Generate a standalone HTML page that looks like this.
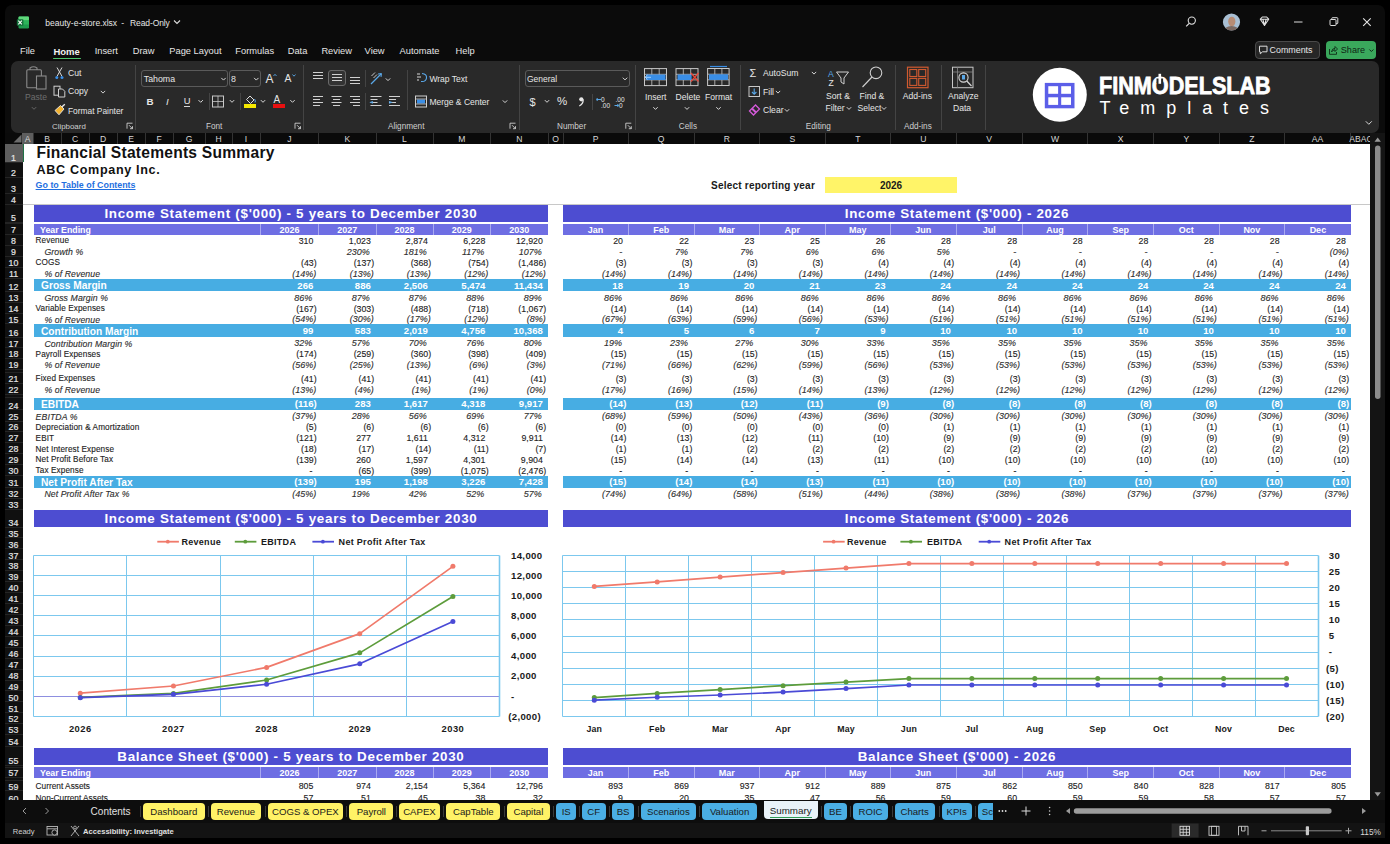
<!DOCTYPE html><html><head><meta charset="utf-8"><style>
html,body{margin:0;padding:0;width:1390px;height:844px;overflow:hidden;background:#000;}
body{position:relative;font-family:"Liberation Sans", sans-serif;}
.t{position:absolute;white-space:nowrap;}
.s .t{-webkit-text-stroke:0.12px currentColor;}
.s .t[style*='font-weight:bold']{-webkit-text-stroke:0;}
.r{position:absolute;}
svg{position:absolute;overflow:visible;}
</style></head><body>
<div class="r" style="left:5.00px;top:5.00px;width:1379.70px;height:833.40px;background:#0b0b0b;border-radius:7px 7px 0 0;"></div>
<div class="r" style="left:11.00px;top:61.00px;width:1368.00px;height:71.50px;background:#292929;border-radius:7px;"></div>
<div class="r" style="left:5.00px;top:133.00px;width:1365.00px;height:10.50px;background:#0a0a0a;"></div>
<div class="r" style="left:22.00px;top:133.00px;width:11.00px;height:10.50px;background:#5e5e5e;"></div>
<div class="r" style="left:32.50px;top:133.00px;width:1.00px;height:10.50px;background:#333;"></div>
<div class="t" style="top:134.52px;font-size:8.6px;line-height:8.6px;color:#d6d6d6;left:-2.50px;width:60px;text-align:center;">A</div>
<div class="r" style="left:60.50px;top:133.00px;width:1.00px;height:10.50px;background:#333;"></div>
<div class="t" style="top:134.52px;font-size:8.6px;line-height:8.6px;color:#d6d6d6;left:17.00px;width:60px;text-align:center;">B</div>
<div class="r" style="left:88.50px;top:133.00px;width:1.00px;height:10.50px;background:#333;"></div>
<div class="t" style="top:134.52px;font-size:8.6px;line-height:8.6px;color:#d6d6d6;left:45.00px;width:60px;text-align:center;">C</div>
<div class="r" style="left:116.50px;top:133.00px;width:1.00px;height:10.50px;background:#333;"></div>
<div class="t" style="top:134.52px;font-size:8.6px;line-height:8.6px;color:#d6d6d6;left:73.00px;width:60px;text-align:center;">D</div>
<div class="r" style="left:144.50px;top:133.00px;width:1.00px;height:10.50px;background:#333;"></div>
<div class="t" style="top:134.52px;font-size:8.6px;line-height:8.6px;color:#d6d6d6;left:101.00px;width:60px;text-align:center;">E</div>
<div class="r" style="left:172.50px;top:133.00px;width:1.00px;height:10.50px;background:#333;"></div>
<div class="t" style="top:134.52px;font-size:8.6px;line-height:8.6px;color:#d6d6d6;left:129.00px;width:60px;text-align:center;">F</div>
<div class="r" style="left:204.50px;top:133.00px;width:1.00px;height:10.50px;background:#333;"></div>
<div class="t" style="top:134.52px;font-size:8.6px;line-height:8.6px;color:#d6d6d6;left:159.00px;width:60px;text-align:center;">G</div>
<div class="r" style="left:231.50px;top:133.00px;width:1.00px;height:10.50px;background:#333;"></div>
<div class="t" style="top:134.52px;font-size:8.6px;line-height:8.6px;color:#d6d6d6;left:188.50px;width:60px;text-align:center;">H</div>
<div class="r" style="left:259.50px;top:133.00px;width:1.00px;height:10.50px;background:#333;"></div>
<div class="t" style="top:134.52px;font-size:8.6px;line-height:8.6px;color:#d6d6d6;left:216.00px;width:60px;text-align:center;">I</div>
<div class="r" style="left:318.00px;top:133.00px;width:1.00px;height:10.50px;background:#333;"></div>
<div class="t" style="top:134.52px;font-size:8.6px;line-height:8.6px;color:#d6d6d6;left:259.50px;width:60px;text-align:center;">J</div>
<div class="r" style="left:375.50px;top:133.00px;width:1.00px;height:10.50px;background:#333;"></div>
<div class="t" style="top:134.52px;font-size:8.6px;line-height:8.6px;color:#d6d6d6;left:317.25px;width:60px;text-align:center;">K</div>
<div class="r" style="left:432.50px;top:133.00px;width:1.00px;height:10.50px;background:#333;"></div>
<div class="t" style="top:134.52px;font-size:8.6px;line-height:8.6px;color:#d6d6d6;left:374.50px;width:60px;text-align:center;">L</div>
<div class="r" style="left:490.00px;top:133.00px;width:1.00px;height:10.50px;background:#333;"></div>
<div class="t" style="top:134.52px;font-size:8.6px;line-height:8.6px;color:#d6d6d6;left:431.75px;width:60px;text-align:center;">M</div>
<div class="r" style="left:547.50px;top:133.00px;width:1.00px;height:10.50px;background:#333;"></div>
<div class="t" style="top:134.52px;font-size:8.6px;line-height:8.6px;color:#d6d6d6;left:489.25px;width:60px;text-align:center;">N</div>
<div class="r" style="left:562.50px;top:133.00px;width:1.00px;height:10.50px;background:#333;"></div>
<div class="t" style="top:134.52px;font-size:8.6px;line-height:8.6px;color:#d6d6d6;left:525.50px;width:60px;text-align:center;">O</div>
<div class="r" style="left:627.70px;top:133.00px;width:1.00px;height:10.50px;background:#333;"></div>
<div class="t" style="top:134.52px;font-size:8.6px;line-height:8.6px;color:#d6d6d6;left:565.60px;width:60px;text-align:center;">P</div>
<div class="r" style="left:693.70px;top:133.00px;width:1.00px;height:10.50px;background:#333;"></div>
<div class="t" style="top:134.52px;font-size:8.6px;line-height:8.6px;color:#d6d6d6;left:631.20px;width:60px;text-align:center;">Q</div>
<div class="r" style="left:759.00px;top:133.00px;width:1.00px;height:10.50px;background:#333;"></div>
<div class="t" style="top:134.52px;font-size:8.6px;line-height:8.6px;color:#d6d6d6;left:696.85px;width:60px;text-align:center;">R</div>
<div class="r" style="left:824.50px;top:133.00px;width:1.00px;height:10.50px;background:#333;"></div>
<div class="t" style="top:134.52px;font-size:8.6px;line-height:8.6px;color:#d6d6d6;left:762.25px;width:60px;text-align:center;">S</div>
<div class="r" style="left:890.20px;top:133.00px;width:1.00px;height:10.50px;background:#333;"></div>
<div class="t" style="top:134.52px;font-size:8.6px;line-height:8.6px;color:#d6d6d6;left:827.85px;width:60px;text-align:center;">T</div>
<div class="r" style="left:955.50px;top:133.00px;width:1.00px;height:10.50px;background:#333;"></div>
<div class="t" style="top:134.52px;font-size:8.6px;line-height:8.6px;color:#d6d6d6;left:893.35px;width:60px;text-align:center;">U</div>
<div class="r" style="left:1021.80px;top:133.00px;width:1.00px;height:10.50px;background:#333;"></div>
<div class="t" style="top:134.52px;font-size:8.6px;line-height:8.6px;color:#d6d6d6;left:959.15px;width:60px;text-align:center;">V</div>
<div class="r" style="left:1087.30px;top:133.00px;width:1.00px;height:10.50px;background:#333;"></div>
<div class="t" style="top:134.52px;font-size:8.6px;line-height:8.6px;color:#d6d6d6;left:1025.05px;width:60px;text-align:center;">W</div>
<div class="r" style="left:1153.10px;top:133.00px;width:1.00px;height:10.50px;background:#333;"></div>
<div class="t" style="top:134.52px;font-size:8.6px;line-height:8.6px;color:#d6d6d6;left:1090.70px;width:60px;text-align:center;">X</div>
<div class="r" style="left:1218.50px;top:133.00px;width:1.00px;height:10.50px;background:#333;"></div>
<div class="t" style="top:134.52px;font-size:8.6px;line-height:8.6px;color:#d6d6d6;left:1156.30px;width:60px;text-align:center;">Y</div>
<div class="r" style="left:1284.30px;top:133.00px;width:1.00px;height:10.50px;background:#333;"></div>
<div class="t" style="top:134.52px;font-size:8.6px;line-height:8.6px;color:#d6d6d6;left:1221.90px;width:60px;text-align:center;">Z</div>
<div class="r" style="left:1349.50px;top:133.00px;width:1.00px;height:10.50px;background:#333;"></div>
<div class="t" style="top:134.52px;font-size:8.6px;line-height:8.6px;color:#d6d6d6;left:1287.40px;width:60px;text-align:center;">AA</div>
<div class="t" style="top:134.52px;font-size:8.6px;line-height:8.6px;color:#d6d6d6;left:1341.00px;width:40px;text-align:center;">ABAC</div>
<svg style="left:13px;top:134px" width="9" height="9"><polygon points="8.5,0.5 8.5,8.5 0.5,8.5" fill="#6b6b6b"/></svg>
<div class="r" style="left:5.00px;top:143.50px;width:17.50px;height:657.00px;background:#101010;"></div>
<div class="r" style="left:5.00px;top:143.50px;width:17.50px;height:18.50px;background:#5e5e5e;"></div>
<div class="r" style="left:5.00px;top:161.50px;width:17.50px;height:1.00px;background:#242424;"></div>
<div class="t" style="top:153.75px;font-size:8.8px;line-height:8.8px;color:#e4e4e4;left:3.50px;width:20px;text-align:center;-webkit-text-stroke:0.2px #e4e4e4;">1</div>
<div class="r" style="left:5.00px;top:177.20px;width:17.50px;height:1.00px;background:#242424;"></div>
<div class="t" style="top:169.45px;font-size:8.8px;line-height:8.8px;color:#e4e4e4;left:3.50px;width:20px;text-align:center;-webkit-text-stroke:0.2px #e4e4e4;">2</div>
<div class="r" style="left:5.00px;top:192.80px;width:17.50px;height:1.00px;background:#242424;"></div>
<div class="t" style="top:185.05px;font-size:8.8px;line-height:8.8px;color:#e4e4e4;left:3.50px;width:20px;text-align:center;-webkit-text-stroke:0.2px #e4e4e4;">3</div>
<div class="r" style="left:5.00px;top:203.80px;width:17.50px;height:1.00px;background:#242424;"></div>
<div class="t" style="top:196.05px;font-size:8.8px;line-height:8.8px;color:#e4e4e4;left:3.50px;width:20px;text-align:center;-webkit-text-stroke:0.2px #e4e4e4;">4</div>
<div class="r" style="left:5.00px;top:221.70px;width:17.50px;height:1.00px;background:#242424;"></div>
<div class="t" style="top:213.95px;font-size:8.8px;line-height:8.8px;color:#e4e4e4;left:3.50px;width:20px;text-align:center;-webkit-text-stroke:0.2px #e4e4e4;">5</div>
<div class="r" style="left:5.00px;top:223.00px;width:17.50px;height:1.00px;background:#242424;"></div>
<div class="r" style="left:5.00px;top:234.00px;width:17.50px;height:1.00px;background:#242424;"></div>
<div class="t" style="top:226.25px;font-size:8.8px;line-height:8.8px;color:#e4e4e4;left:3.50px;width:20px;text-align:center;-webkit-text-stroke:0.2px #e4e4e4;">7</div>
<div class="r" style="left:5.00px;top:244.80px;width:17.50px;height:1.00px;background:#242424;"></div>
<div class="t" style="top:237.05px;font-size:8.8px;line-height:8.8px;color:#e4e4e4;left:3.50px;width:20px;text-align:center;-webkit-text-stroke:0.2px #e4e4e4;">8</div>
<div class="r" style="left:5.00px;top:255.80px;width:17.50px;height:1.00px;background:#242424;"></div>
<div class="t" style="top:248.05px;font-size:8.8px;line-height:8.8px;color:#e4e4e4;left:3.50px;width:20px;text-align:center;-webkit-text-stroke:0.2px #e4e4e4;">9</div>
<div class="r" style="left:5.00px;top:266.70px;width:17.50px;height:1.00px;background:#242424;"></div>
<div class="t" style="top:258.95px;font-size:8.8px;line-height:8.8px;color:#e4e4e4;left:3.50px;width:20px;text-align:center;-webkit-text-stroke:0.2px #e4e4e4;">10</div>
<div class="r" style="left:5.00px;top:277.60px;width:17.50px;height:1.00px;background:#242424;"></div>
<div class="t" style="top:269.85px;font-size:8.8px;line-height:8.8px;color:#e4e4e4;left:3.50px;width:20px;text-align:center;-webkit-text-stroke:0.2px #e4e4e4;">11</div>
<div class="r" style="left:5.00px;top:290.90px;width:17.50px;height:1.00px;background:#242424;"></div>
<div class="t" style="top:283.15px;font-size:8.8px;line-height:8.8px;color:#e4e4e4;left:3.50px;width:20px;text-align:center;-webkit-text-stroke:0.2px #e4e4e4;">12</div>
<div class="r" style="left:5.00px;top:301.70px;width:17.50px;height:1.00px;background:#242424;"></div>
<div class="t" style="top:293.95px;font-size:8.8px;line-height:8.8px;color:#e4e4e4;left:3.50px;width:20px;text-align:center;-webkit-text-stroke:0.2px #e4e4e4;">13</div>
<div class="r" style="left:5.00px;top:312.50px;width:17.50px;height:1.00px;background:#242424;"></div>
<div class="t" style="top:304.75px;font-size:8.8px;line-height:8.8px;color:#e4e4e4;left:3.50px;width:20px;text-align:center;-webkit-text-stroke:0.2px #e4e4e4;">14</div>
<div class="r" style="left:5.00px;top:323.30px;width:17.50px;height:1.00px;background:#242424;"></div>
<div class="t" style="top:315.55px;font-size:8.8px;line-height:8.8px;color:#e4e4e4;left:3.50px;width:20px;text-align:center;-webkit-text-stroke:0.2px #e4e4e4;">15</div>
<div class="r" style="left:5.00px;top:336.60px;width:17.50px;height:1.00px;background:#242424;"></div>
<div class="t" style="top:328.85px;font-size:8.8px;line-height:8.8px;color:#e4e4e4;left:3.50px;width:20px;text-align:center;-webkit-text-stroke:0.2px #e4e4e4;">16</div>
<div class="r" style="left:5.00px;top:347.40px;width:17.50px;height:1.00px;background:#242424;"></div>
<div class="t" style="top:339.65px;font-size:8.8px;line-height:8.8px;color:#e4e4e4;left:3.50px;width:20px;text-align:center;-webkit-text-stroke:0.2px #e4e4e4;">17</div>
<div class="r" style="left:5.00px;top:358.20px;width:17.50px;height:1.00px;background:#242424;"></div>
<div class="t" style="top:350.45px;font-size:8.8px;line-height:8.8px;color:#e4e4e4;left:3.50px;width:20px;text-align:center;-webkit-text-stroke:0.2px #e4e4e4;">18</div>
<div class="r" style="left:5.00px;top:369.00px;width:17.50px;height:1.00px;background:#242424;"></div>
<div class="t" style="top:361.25px;font-size:8.8px;line-height:8.8px;color:#e4e4e4;left:3.50px;width:20px;text-align:center;-webkit-text-stroke:0.2px #e4e4e4;">19</div>
<div class="r" style="left:5.00px;top:371.50px;width:17.50px;height:1.00px;background:#242424;"></div>
<div class="r" style="left:5.00px;top:382.50px;width:17.50px;height:1.00px;background:#242424;"></div>
<div class="t" style="top:374.75px;font-size:8.8px;line-height:8.8px;color:#e4e4e4;left:3.50px;width:20px;text-align:center;-webkit-text-stroke:0.2px #e4e4e4;">21</div>
<div class="r" style="left:5.00px;top:393.90px;width:17.50px;height:1.00px;background:#242424;"></div>
<div class="t" style="top:386.15px;font-size:8.8px;line-height:8.8px;color:#e4e4e4;left:3.50px;width:20px;text-align:center;-webkit-text-stroke:0.2px #e4e4e4;">22</div>
<div class="r" style="left:5.00px;top:397.00px;width:17.50px;height:1.00px;background:#242424;"></div>
<div class="r" style="left:5.00px;top:409.30px;width:17.50px;height:1.00px;background:#242424;"></div>
<div class="t" style="top:401.55px;font-size:8.8px;line-height:8.8px;color:#e4e4e4;left:3.50px;width:20px;text-align:center;-webkit-text-stroke:0.2px #e4e4e4;">24</div>
<div class="r" style="left:5.00px;top:420.50px;width:17.50px;height:1.00px;background:#242424;"></div>
<div class="t" style="top:412.75px;font-size:8.8px;line-height:8.8px;color:#e4e4e4;left:3.50px;width:20px;text-align:center;-webkit-text-stroke:0.2px #e4e4e4;">25</div>
<div class="r" style="left:5.00px;top:431.20px;width:17.50px;height:1.00px;background:#242424;"></div>
<div class="t" style="top:423.45px;font-size:8.8px;line-height:8.8px;color:#e4e4e4;left:3.50px;width:20px;text-align:center;-webkit-text-stroke:0.2px #e4e4e4;">26</div>
<div class="r" style="left:5.00px;top:442.00px;width:17.50px;height:1.00px;background:#242424;"></div>
<div class="t" style="top:434.25px;font-size:8.8px;line-height:8.8px;color:#e4e4e4;left:3.50px;width:20px;text-align:center;-webkit-text-stroke:0.2px #e4e4e4;">27</div>
<div class="r" style="left:5.00px;top:453.00px;width:17.50px;height:1.00px;background:#242424;"></div>
<div class="t" style="top:445.25px;font-size:8.8px;line-height:8.8px;color:#e4e4e4;left:3.50px;width:20px;text-align:center;-webkit-text-stroke:0.2px #e4e4e4;">28</div>
<div class="r" style="left:5.00px;top:463.80px;width:17.50px;height:1.00px;background:#242424;"></div>
<div class="t" style="top:456.05px;font-size:8.8px;line-height:8.8px;color:#e4e4e4;left:3.50px;width:20px;text-align:center;-webkit-text-stroke:0.2px #e4e4e4;">29</div>
<div class="r" style="left:5.00px;top:474.50px;width:17.50px;height:1.00px;background:#242424;"></div>
<div class="t" style="top:466.75px;font-size:8.8px;line-height:8.8px;color:#e4e4e4;left:3.50px;width:20px;text-align:center;-webkit-text-stroke:0.2px #e4e4e4;">30</div>
<div class="r" style="left:5.00px;top:487.20px;width:17.50px;height:1.00px;background:#242424;"></div>
<div class="t" style="top:479.45px;font-size:8.8px;line-height:8.8px;color:#e4e4e4;left:3.50px;width:20px;text-align:center;-webkit-text-stroke:0.2px #e4e4e4;">31</div>
<div class="r" style="left:5.00px;top:497.80px;width:17.50px;height:1.00px;background:#242424;"></div>
<div class="t" style="top:490.05px;font-size:8.8px;line-height:8.8px;color:#e4e4e4;left:3.50px;width:20px;text-align:center;-webkit-text-stroke:0.2px #e4e4e4;">32</div>
<div class="r" style="left:5.00px;top:509.00px;width:17.50px;height:1.00px;background:#242424;"></div>
<div class="t" style="top:501.25px;font-size:8.8px;line-height:8.8px;color:#e4e4e4;left:3.50px;width:20px;text-align:center;-webkit-text-stroke:0.2px #e4e4e4;">33</div>
<div class="r" style="left:5.00px;top:526.50px;width:17.50px;height:1.00px;background:#242424;"></div>
<div class="t" style="top:518.75px;font-size:8.8px;line-height:8.8px;color:#e4e4e4;left:3.50px;width:20px;text-align:center;-webkit-text-stroke:0.2px #e4e4e4;">34</div>
<div class="r" style="left:5.00px;top:537.43px;width:17.50px;height:1.00px;background:#242424;"></div>
<div class="t" style="top:529.68px;font-size:8.8px;line-height:8.8px;color:#e4e4e4;left:3.50px;width:20px;text-align:center;-webkit-text-stroke:0.2px #e4e4e4;">35</div>
<div class="r" style="left:5.00px;top:548.36px;width:17.50px;height:1.00px;background:#242424;"></div>
<div class="t" style="top:540.61px;font-size:8.8px;line-height:8.8px;color:#e4e4e4;left:3.50px;width:20px;text-align:center;-webkit-text-stroke:0.2px #e4e4e4;">36</div>
<div class="r" style="left:5.00px;top:559.29px;width:17.50px;height:1.00px;background:#242424;"></div>
<div class="t" style="top:551.54px;font-size:8.8px;line-height:8.8px;color:#e4e4e4;left:3.50px;width:20px;text-align:center;-webkit-text-stroke:0.2px #e4e4e4;">37</div>
<div class="r" style="left:5.00px;top:570.22px;width:17.50px;height:1.00px;background:#242424;"></div>
<div class="t" style="top:562.47px;font-size:8.8px;line-height:8.8px;color:#e4e4e4;left:3.50px;width:20px;text-align:center;-webkit-text-stroke:0.2px #e4e4e4;">38</div>
<div class="r" style="left:5.00px;top:581.15px;width:17.50px;height:1.00px;background:#242424;"></div>
<div class="t" style="top:573.40px;font-size:8.8px;line-height:8.8px;color:#e4e4e4;left:3.50px;width:20px;text-align:center;-webkit-text-stroke:0.2px #e4e4e4;">39</div>
<div class="r" style="left:5.00px;top:592.08px;width:17.50px;height:1.00px;background:#242424;"></div>
<div class="t" style="top:584.33px;font-size:8.8px;line-height:8.8px;color:#e4e4e4;left:3.50px;width:20px;text-align:center;-webkit-text-stroke:0.2px #e4e4e4;">40</div>
<div class="r" style="left:5.00px;top:603.01px;width:17.50px;height:1.00px;background:#242424;"></div>
<div class="t" style="top:595.26px;font-size:8.8px;line-height:8.8px;color:#e4e4e4;left:3.50px;width:20px;text-align:center;-webkit-text-stroke:0.2px #e4e4e4;">41</div>
<div class="r" style="left:5.00px;top:613.94px;width:17.50px;height:1.00px;background:#242424;"></div>
<div class="t" style="top:606.19px;font-size:8.8px;line-height:8.8px;color:#e4e4e4;left:3.50px;width:20px;text-align:center;-webkit-text-stroke:0.2px #e4e4e4;">42</div>
<div class="r" style="left:5.00px;top:624.87px;width:17.50px;height:1.00px;background:#242424;"></div>
<div class="t" style="top:617.12px;font-size:8.8px;line-height:8.8px;color:#e4e4e4;left:3.50px;width:20px;text-align:center;-webkit-text-stroke:0.2px #e4e4e4;">43</div>
<div class="r" style="left:5.00px;top:635.80px;width:17.50px;height:1.00px;background:#242424;"></div>
<div class="t" style="top:628.05px;font-size:8.8px;line-height:8.8px;color:#e4e4e4;left:3.50px;width:20px;text-align:center;-webkit-text-stroke:0.2px #e4e4e4;">44</div>
<div class="r" style="left:5.00px;top:646.73px;width:17.50px;height:1.00px;background:#242424;"></div>
<div class="t" style="top:638.98px;font-size:8.8px;line-height:8.8px;color:#e4e4e4;left:3.50px;width:20px;text-align:center;-webkit-text-stroke:0.2px #e4e4e4;">45</div>
<div class="r" style="left:5.00px;top:657.66px;width:17.50px;height:1.00px;background:#242424;"></div>
<div class="t" style="top:649.91px;font-size:8.8px;line-height:8.8px;color:#e4e4e4;left:3.50px;width:20px;text-align:center;-webkit-text-stroke:0.2px #e4e4e4;">46</div>
<div class="r" style="left:5.00px;top:668.59px;width:17.50px;height:1.00px;background:#242424;"></div>
<div class="t" style="top:660.84px;font-size:8.8px;line-height:8.8px;color:#e4e4e4;left:3.50px;width:20px;text-align:center;-webkit-text-stroke:0.2px #e4e4e4;">47</div>
<div class="r" style="left:5.00px;top:679.52px;width:17.50px;height:1.00px;background:#242424;"></div>
<div class="t" style="top:671.77px;font-size:8.8px;line-height:8.8px;color:#e4e4e4;left:3.50px;width:20px;text-align:center;-webkit-text-stroke:0.2px #e4e4e4;">48</div>
<div class="r" style="left:5.00px;top:690.45px;width:17.50px;height:1.00px;background:#242424;"></div>
<div class="t" style="top:682.70px;font-size:8.8px;line-height:8.8px;color:#e4e4e4;left:3.50px;width:20px;text-align:center;-webkit-text-stroke:0.2px #e4e4e4;">49</div>
<div class="r" style="left:5.00px;top:701.38px;width:17.50px;height:1.00px;background:#242424;"></div>
<div class="t" style="top:693.63px;font-size:8.8px;line-height:8.8px;color:#e4e4e4;left:3.50px;width:20px;text-align:center;-webkit-text-stroke:0.2px #e4e4e4;">50</div>
<div class="r" style="left:5.00px;top:712.31px;width:17.50px;height:1.00px;background:#242424;"></div>
<div class="t" style="top:704.56px;font-size:8.8px;line-height:8.8px;color:#e4e4e4;left:3.50px;width:20px;text-align:center;-webkit-text-stroke:0.2px #e4e4e4;">51</div>
<div class="r" style="left:5.00px;top:723.24px;width:17.50px;height:1.00px;background:#242424;"></div>
<div class="t" style="top:715.49px;font-size:8.8px;line-height:8.8px;color:#e4e4e4;left:3.50px;width:20px;text-align:center;-webkit-text-stroke:0.2px #e4e4e4;">52</div>
<div class="r" style="left:5.00px;top:734.17px;width:17.50px;height:1.00px;background:#242424;"></div>
<div class="t" style="top:726.42px;font-size:8.8px;line-height:8.8px;color:#e4e4e4;left:3.50px;width:20px;text-align:center;-webkit-text-stroke:0.2px #e4e4e4;">53</div>
<div class="r" style="left:5.00px;top:745.50px;width:17.50px;height:1.00px;background:#242424;"></div>
<div class="t" style="top:737.75px;font-size:8.8px;line-height:8.8px;color:#e4e4e4;left:3.50px;width:20px;text-align:center;-webkit-text-stroke:0.2px #e4e4e4;">54</div>
<div class="r" style="left:5.00px;top:764.50px;width:17.50px;height:1.00px;background:#242424;"></div>
<div class="t" style="top:756.75px;font-size:8.8px;line-height:8.8px;color:#e4e4e4;left:3.50px;width:20px;text-align:center;-webkit-text-stroke:0.2px #e4e4e4;">55</div>
<div class="r" style="left:5.00px;top:766.70px;width:17.50px;height:1.00px;background:#242424;"></div>
<div class="r" style="left:5.00px;top:777.00px;width:17.50px;height:1.00px;background:#242424;"></div>
<div class="t" style="top:769.25px;font-size:8.8px;line-height:8.8px;color:#e4e4e4;left:3.50px;width:20px;text-align:center;-webkit-text-stroke:0.2px #e4e4e4;">57</div>
<div class="r" style="left:5.00px;top:779.50px;width:17.50px;height:1.00px;background:#242424;"></div>
<div class="r" style="left:5.00px;top:790.30px;width:17.50px;height:1.00px;background:#242424;"></div>
<div class="t" style="top:782.55px;font-size:8.8px;line-height:8.8px;color:#e4e4e4;left:3.50px;width:20px;text-align:center;-webkit-text-stroke:0.2px #e4e4e4;">59</div>
<div class="r" style="left:5.00px;top:802.50px;width:17.50px;height:1.00px;background:#242424;"></div>
<div class="t" style="top:794.75px;font-size:8.8px;line-height:8.8px;color:#e4e4e4;left:3.50px;width:20px;text-align:center;-webkit-text-stroke:0.2px #e4e4e4;">60</div>
<div class="r" style="left:22.50px;top:143.50px;width:1347.50px;height:656.50px;background:#ffffff;"></div>
<div class="r" style="left:22.50px;top:204.00px;width:1347.50px;height:0.80px;background:#c8c8c8;"></div>
<div class="r" style="left:22.50px;top:143.50px;width:1.20px;height:18.50px;background:#1e7145;"></div>
<div class="s">
<div class="t" style="top:145.29px;font-size:15.6px;line-height:15.6px;color:#111;font-weight:bold;letter-spacing:0.24px;left:36.50px;">Financial Statements Summary</div>
<div class="t" style="top:164.03px;font-size:12.6px;line-height:12.6px;color:#111;font-weight:bold;letter-spacing:0.66px;left:36.50px;">ABC Company Inc.</div>
<div class="t" style="top:180.77px;font-size:8.9px;line-height:8.9px;color:#1f6fe0;font-weight:bold;left:35.60px;"><u>Go to Table of Contents</u></div>
<div class="t" style="top:180.53px;font-size:10px;line-height:10px;color:#1a1a1a;font-weight:bold;letter-spacing:0.21px;right:575.00px;">Select reporting year</div>
<div class="r" style="left:825.00px;top:176.80px;width:132.00px;height:16.60px;background:#fff468;"></div>
<div class="t" style="top:180.53px;font-size:10px;line-height:10px;color:#1a1a1a;font-weight:bold;left:851.00px;width:80px;text-align:center;">2026</div>
<div class="r" style="left:33.80px;top:205.00px;width:514.20px;height:16.70px;background:#4d4dd1;"></div>
<div class="r" style="left:562.80px;top:205.00px;width:788.20px;height:16.70px;background:#4d4dd1;"></div>
<div class="t" style="top:206.76px;font-size:13.4px;line-height:13.4px;color:#fff;font-weight:bold;letter-spacing:0.7px;left:-9.10px;width:600px;text-align:center;">Income Statement ($'000) - 5 years to December 2030</div>
<div class="t" style="top:206.76px;font-size:13.4px;line-height:13.4px;color:#fff;font-weight:bold;letter-spacing:0.7px;left:656.90px;width:600px;text-align:center;">Income Statement ($'000) - 2026</div>
<div class="r" style="left:33.80px;top:223.90px;width:514.20px;height:10.90px;background:#6e6ee3;"></div>
<div class="r" style="left:562.80px;top:223.90px;width:788.20px;height:10.90px;background:#6e6ee3;"></div>
<div class="t" style="top:226.15px;font-size:8.8px;line-height:8.8px;color:#fff;font-weight:bold;left:40.00px;">Year Ending</div>
<div class="r" style="left:260.00px;top:223.90px;width:1.00px;height:10.90px;background:#a9a9f0;"></div>
<div class="t" style="top:225.98px;font-size:9px;line-height:9px;color:#fff;font-weight:bold;left:259.50px;width:60px;text-align:center;">2026</div>
<div class="r" style="left:318.00px;top:223.90px;width:1.00px;height:10.90px;background:#a9a9f0;"></div>
<div class="t" style="top:225.98px;font-size:9px;line-height:9px;color:#fff;font-weight:bold;left:317.25px;width:60px;text-align:center;">2027</div>
<div class="r" style="left:375.50px;top:223.90px;width:1.00px;height:10.90px;background:#a9a9f0;"></div>
<div class="t" style="top:225.98px;font-size:9px;line-height:9px;color:#fff;font-weight:bold;left:374.50px;width:60px;text-align:center;">2028</div>
<div class="r" style="left:432.50px;top:223.90px;width:1.00px;height:10.90px;background:#a9a9f0;"></div>
<div class="t" style="top:225.98px;font-size:9px;line-height:9px;color:#fff;font-weight:bold;left:431.75px;width:60px;text-align:center;">2029</div>
<div class="r" style="left:490.00px;top:223.90px;width:1.00px;height:10.90px;background:#a9a9f0;"></div>
<div class="t" style="top:225.98px;font-size:9px;line-height:9px;color:#fff;font-weight:bold;left:489.25px;width:60px;text-align:center;">2030</div>
<div class="t" style="top:225.98px;font-size:9px;line-height:9px;color:#fff;font-weight:bold;left:565.60px;width:60px;text-align:center;">Jan</div>
<div class="r" style="left:627.70px;top:223.90px;width:1.00px;height:10.90px;background:#a9a9f0;"></div>
<div class="t" style="top:225.98px;font-size:9px;line-height:9px;color:#fff;font-weight:bold;left:631.20px;width:60px;text-align:center;">Feb</div>
<div class="r" style="left:693.70px;top:223.90px;width:1.00px;height:10.90px;background:#a9a9f0;"></div>
<div class="t" style="top:225.98px;font-size:9px;line-height:9px;color:#fff;font-weight:bold;left:696.85px;width:60px;text-align:center;">Mar</div>
<div class="r" style="left:759.00px;top:223.90px;width:1.00px;height:10.90px;background:#a9a9f0;"></div>
<div class="t" style="top:225.98px;font-size:9px;line-height:9px;color:#fff;font-weight:bold;left:762.25px;width:60px;text-align:center;">Apr</div>
<div class="r" style="left:824.50px;top:223.90px;width:1.00px;height:10.90px;background:#a9a9f0;"></div>
<div class="t" style="top:225.98px;font-size:9px;line-height:9px;color:#fff;font-weight:bold;left:827.85px;width:60px;text-align:center;">May</div>
<div class="r" style="left:890.20px;top:223.90px;width:1.00px;height:10.90px;background:#a9a9f0;"></div>
<div class="t" style="top:225.98px;font-size:9px;line-height:9px;color:#fff;font-weight:bold;left:893.35px;width:60px;text-align:center;">Jun</div>
<div class="r" style="left:955.50px;top:223.90px;width:1.00px;height:10.90px;background:#a9a9f0;"></div>
<div class="t" style="top:225.98px;font-size:9px;line-height:9px;color:#fff;font-weight:bold;left:959.15px;width:60px;text-align:center;">Jul</div>
<div class="r" style="left:1021.80px;top:223.90px;width:1.00px;height:10.90px;background:#a9a9f0;"></div>
<div class="t" style="top:225.98px;font-size:9px;line-height:9px;color:#fff;font-weight:bold;left:1025.05px;width:60px;text-align:center;">Aug</div>
<div class="r" style="left:1087.30px;top:223.90px;width:1.00px;height:10.90px;background:#a9a9f0;"></div>
<div class="t" style="top:225.98px;font-size:9px;line-height:9px;color:#fff;font-weight:bold;left:1090.70px;width:60px;text-align:center;">Sep</div>
<div class="r" style="left:1153.10px;top:223.90px;width:1.00px;height:10.90px;background:#a9a9f0;"></div>
<div class="t" style="top:225.98px;font-size:9px;line-height:9px;color:#fff;font-weight:bold;left:1156.30px;width:60px;text-align:center;">Oct</div>
<div class="r" style="left:1218.50px;top:223.90px;width:1.00px;height:10.90px;background:#a9a9f0;"></div>
<div class="t" style="top:225.98px;font-size:9px;line-height:9px;color:#fff;font-weight:bold;left:1221.90px;width:60px;text-align:center;">Nov</div>
<div class="r" style="left:1284.30px;top:223.90px;width:1.00px;height:10.90px;background:#a9a9f0;"></div>
<div class="t" style="top:225.98px;font-size:9px;line-height:9px;color:#fff;font-weight:bold;left:1287.90px;width:60px;text-align:center;">Dec</div>
<div class="t" style="top:237.46px;font-size:8.2px;line-height:8.2px;color:#1c1c1c;letter-spacing:0.1px;left:35.60px;">Revenue</div>
<div class="t" style="top:236.95px;font-size:8.8px;line-height:8.8px;color:#1c1c1c;right:1076.70px;">310</div>
<div class="t" style="top:236.95px;font-size:8.8px;line-height:8.8px;color:#1c1c1c;right:1019.20px;">1,023</div>
<div class="t" style="top:236.95px;font-size:8.8px;line-height:8.8px;color:#1c1c1c;right:962.20px;">2,874</div>
<div class="t" style="top:236.95px;font-size:8.8px;line-height:8.8px;color:#1c1c1c;right:904.70px;">6,228</div>
<div class="t" style="top:236.95px;font-size:8.8px;line-height:8.8px;color:#1c1c1c;right:847.20px;">12,920</div>
<div class="t" style="top:236.95px;font-size:8.8px;line-height:8.8px;color:#1c1c1c;right:767.00px;">20</div>
<div class="t" style="top:236.95px;font-size:8.8px;line-height:8.8px;color:#1c1c1c;right:701.00px;">22</div>
<div class="t" style="top:236.95px;font-size:8.8px;line-height:8.8px;color:#1c1c1c;right:635.70px;">23</div>
<div class="t" style="top:236.95px;font-size:8.8px;line-height:8.8px;color:#1c1c1c;right:570.20px;">25</div>
<div class="t" style="top:236.95px;font-size:8.8px;line-height:8.8px;color:#1c1c1c;right:504.50px;">26</div>
<div class="t" style="top:236.95px;font-size:8.8px;line-height:8.8px;color:#1c1c1c;right:439.20px;">28</div>
<div class="t" style="top:236.95px;font-size:8.8px;line-height:8.8px;color:#1c1c1c;right:372.90px;">28</div>
<div class="t" style="top:236.95px;font-size:8.8px;line-height:8.8px;color:#1c1c1c;right:307.40px;">28</div>
<div class="t" style="top:236.95px;font-size:8.8px;line-height:8.8px;color:#1c1c1c;right:241.60px;">28</div>
<div class="t" style="top:236.95px;font-size:8.8px;line-height:8.8px;color:#1c1c1c;right:176.20px;">28</div>
<div class="t" style="top:236.95px;font-size:8.8px;line-height:8.8px;color:#1c1c1c;right:110.40px;">28</div>
<div class="t" style="top:236.95px;font-size:8.8px;line-height:8.8px;color:#1c1c1c;right:44.20px;">28</div>
<div class="t" style="top:248.04px;font-size:8.7px;line-height:8.7px;color:#2e2e2e;font-style:italic;letter-spacing:0.1px;left:44.40px;">Growth %</div>
<div class="t" style="top:247.78px;font-size:9.0px;line-height:9.0px;color:#2e2e2e;font-style:italic;right:1020.20px;">230%</div>
<div class="t" style="top:247.78px;font-size:9.0px;line-height:9.0px;color:#2e2e2e;font-style:italic;right:963.20px;">181%</div>
<div class="t" style="top:247.78px;font-size:9.0px;line-height:9.0px;color:#2e2e2e;font-style:italic;right:905.70px;">117%</div>
<div class="t" style="top:247.78px;font-size:9.0px;line-height:9.0px;color:#2e2e2e;font-style:italic;right:848.20px;">107%</div>
<div class="t" style="top:247.78px;font-size:9.0px;line-height:9.0px;color:#2e2e2e;font-style:italic;right:767.80px;">-</div>
<div class="t" style="top:247.78px;font-size:9.0px;line-height:9.0px;color:#2e2e2e;font-style:italic;right:702.00px;">7%</div>
<div class="t" style="top:247.78px;font-size:9.0px;line-height:9.0px;color:#2e2e2e;font-style:italic;right:636.70px;">7%</div>
<div class="t" style="top:247.78px;font-size:9.0px;line-height:9.0px;color:#2e2e2e;font-style:italic;right:571.20px;">6%</div>
<div class="t" style="top:247.78px;font-size:9.0px;line-height:9.0px;color:#2e2e2e;font-style:italic;right:505.50px;">6%</div>
<div class="t" style="top:247.78px;font-size:9.0px;line-height:9.0px;color:#2e2e2e;font-style:italic;right:440.20px;">5%</div>
<div class="t" style="top:247.78px;font-size:9.0px;line-height:9.0px;color:#2e2e2e;font-style:italic;right:373.70px;">-</div>
<div class="t" style="top:247.78px;font-size:9.0px;line-height:9.0px;color:#2e2e2e;font-style:italic;right:308.20px;">-</div>
<div class="t" style="top:247.78px;font-size:9.0px;line-height:9.0px;color:#2e2e2e;font-style:italic;right:242.40px;">-</div>
<div class="t" style="top:247.78px;font-size:9.0px;line-height:9.0px;color:#2e2e2e;font-style:italic;right:177.00px;">-</div>
<div class="t" style="top:247.78px;font-size:9.0px;line-height:9.0px;color:#2e2e2e;font-style:italic;right:111.20px;">-</div>
<div class="t" style="top:247.78px;font-size:9.0px;line-height:9.0px;color:#2e2e2e;font-style:italic;right:41.20px;">(0%)</div>
<div class="t" style="top:259.36px;font-size:8.2px;line-height:8.2px;color:#1c1c1c;letter-spacing:0.1px;left:35.60px;">COGS</div>
<div class="t" style="top:258.85px;font-size:8.8px;line-height:8.8px;color:#1c1c1c;right:1073.30px;">(43)</div>
<div class="t" style="top:258.85px;font-size:8.8px;line-height:8.8px;color:#1c1c1c;right:1015.80px;">(137)</div>
<div class="t" style="top:258.85px;font-size:8.8px;line-height:8.8px;color:#1c1c1c;right:958.80px;">(368)</div>
<div class="t" style="top:258.85px;font-size:8.8px;line-height:8.8px;color:#1c1c1c;right:901.30px;">(754)</div>
<div class="t" style="top:258.85px;font-size:8.8px;line-height:8.8px;color:#1c1c1c;right:843.80px;">(1,486)</div>
<div class="t" style="top:258.85px;font-size:8.8px;line-height:8.8px;color:#1c1c1c;right:763.60px;">(3)</div>
<div class="t" style="top:258.85px;font-size:8.8px;line-height:8.8px;color:#1c1c1c;right:697.60px;">(3)</div>
<div class="t" style="top:258.85px;font-size:8.8px;line-height:8.8px;color:#1c1c1c;right:632.30px;">(3)</div>
<div class="t" style="top:258.85px;font-size:8.8px;line-height:8.8px;color:#1c1c1c;right:566.80px;">(3)</div>
<div class="t" style="top:258.85px;font-size:8.8px;line-height:8.8px;color:#1c1c1c;right:501.10px;">(4)</div>
<div class="t" style="top:258.85px;font-size:8.8px;line-height:8.8px;color:#1c1c1c;right:435.80px;">(4)</div>
<div class="t" style="top:258.85px;font-size:8.8px;line-height:8.8px;color:#1c1c1c;right:369.50px;">(4)</div>
<div class="t" style="top:258.85px;font-size:8.8px;line-height:8.8px;color:#1c1c1c;right:304.00px;">(4)</div>
<div class="t" style="top:258.85px;font-size:8.8px;line-height:8.8px;color:#1c1c1c;right:238.20px;">(4)</div>
<div class="t" style="top:258.85px;font-size:8.8px;line-height:8.8px;color:#1c1c1c;right:172.80px;">(4)</div>
<div class="t" style="top:258.85px;font-size:8.8px;line-height:8.8px;color:#1c1c1c;right:107.00px;">(4)</div>
<div class="t" style="top:258.85px;font-size:8.8px;line-height:8.8px;color:#1c1c1c;right:40.80px;">(4)</div>
<div class="t" style="top:269.84px;font-size:8.7px;line-height:8.7px;color:#2e2e2e;font-style:italic;letter-spacing:0.1px;left:44.40px;">% of Revenue</div>
<div class="t" style="top:269.58px;font-size:9.0px;line-height:9.0px;color:#2e2e2e;font-style:italic;right:1073.70px;">(14%)</div>
<div class="t" style="top:269.58px;font-size:9.0px;line-height:9.0px;color:#2e2e2e;font-style:italic;right:1016.20px;">(13%)</div>
<div class="t" style="top:269.58px;font-size:9.0px;line-height:9.0px;color:#2e2e2e;font-style:italic;right:959.20px;">(13%)</div>
<div class="t" style="top:269.58px;font-size:9.0px;line-height:9.0px;color:#2e2e2e;font-style:italic;right:901.70px;">(12%)</div>
<div class="t" style="top:269.58px;font-size:9.0px;line-height:9.0px;color:#2e2e2e;font-style:italic;right:844.20px;">(12%)</div>
<div class="t" style="top:269.58px;font-size:9.0px;line-height:9.0px;color:#2e2e2e;font-style:italic;right:764.00px;">(14%)</div>
<div class="t" style="top:269.58px;font-size:9.0px;line-height:9.0px;color:#2e2e2e;font-style:italic;right:698.00px;">(14%)</div>
<div class="t" style="top:269.58px;font-size:9.0px;line-height:9.0px;color:#2e2e2e;font-style:italic;right:632.70px;">(14%)</div>
<div class="t" style="top:269.58px;font-size:9.0px;line-height:9.0px;color:#2e2e2e;font-style:italic;right:567.20px;">(14%)</div>
<div class="t" style="top:269.58px;font-size:9.0px;line-height:9.0px;color:#2e2e2e;font-style:italic;right:501.50px;">(14%)</div>
<div class="t" style="top:269.58px;font-size:9.0px;line-height:9.0px;color:#2e2e2e;font-style:italic;right:436.20px;">(14%)</div>
<div class="t" style="top:269.58px;font-size:9.0px;line-height:9.0px;color:#2e2e2e;font-style:italic;right:369.90px;">(14%)</div>
<div class="t" style="top:269.58px;font-size:9.0px;line-height:9.0px;color:#2e2e2e;font-style:italic;right:304.40px;">(14%)</div>
<div class="t" style="top:269.58px;font-size:9.0px;line-height:9.0px;color:#2e2e2e;font-style:italic;right:238.60px;">(14%)</div>
<div class="t" style="top:269.58px;font-size:9.0px;line-height:9.0px;color:#2e2e2e;font-style:italic;right:173.20px;">(14%)</div>
<div class="t" style="top:269.58px;font-size:9.0px;line-height:9.0px;color:#2e2e2e;font-style:italic;right:107.40px;">(14%)</div>
<div class="t" style="top:269.58px;font-size:9.0px;line-height:9.0px;color:#2e2e2e;font-style:italic;right:41.20px;">(14%)</div>
<div class="r" style="left:33.80px;top:278.70px;width:514.20px;height:12.70px;background:#47ade3;"></div>
<div class="r" style="left:562.80px;top:278.70px;width:788.20px;height:12.70px;background:#47ade3;"></div>
<div class="t" style="top:281.37px;font-size:10.2px;line-height:10.2px;color:#fff;font-weight:bold;left:41.00px;">Gross Margin</div>
<div class="t" style="top:280.57px;font-size:9.6px;line-height:9.6px;color:#fff;font-weight:bold;right:1076.70px;">266</div>
<div class="t" style="top:280.57px;font-size:9.6px;line-height:9.6px;color:#fff;font-weight:bold;right:1019.20px;">886</div>
<div class="t" style="top:280.57px;font-size:9.6px;line-height:9.6px;color:#fff;font-weight:bold;right:962.20px;">2,506</div>
<div class="t" style="top:280.57px;font-size:9.6px;line-height:9.6px;color:#fff;font-weight:bold;right:904.70px;">5,474</div>
<div class="t" style="top:280.57px;font-size:9.6px;line-height:9.6px;color:#fff;font-weight:bold;right:847.20px;">11,434</div>
<div class="t" style="top:280.57px;font-size:9.6px;line-height:9.6px;color:#fff;font-weight:bold;right:767.00px;">18</div>
<div class="t" style="top:280.57px;font-size:9.6px;line-height:9.6px;color:#fff;font-weight:bold;right:701.00px;">19</div>
<div class="t" style="top:280.57px;font-size:9.6px;line-height:9.6px;color:#fff;font-weight:bold;right:635.70px;">20</div>
<div class="t" style="top:280.57px;font-size:9.6px;line-height:9.6px;color:#fff;font-weight:bold;right:570.20px;">21</div>
<div class="t" style="top:280.57px;font-size:9.6px;line-height:9.6px;color:#fff;font-weight:bold;right:504.50px;">23</div>
<div class="t" style="top:280.57px;font-size:9.6px;line-height:9.6px;color:#fff;font-weight:bold;right:439.20px;">24</div>
<div class="t" style="top:280.57px;font-size:9.6px;line-height:9.6px;color:#fff;font-weight:bold;right:372.90px;">24</div>
<div class="t" style="top:280.57px;font-size:9.6px;line-height:9.6px;color:#fff;font-weight:bold;right:307.40px;">24</div>
<div class="t" style="top:280.57px;font-size:9.6px;line-height:9.6px;color:#fff;font-weight:bold;right:241.60px;">24</div>
<div class="t" style="top:280.57px;font-size:9.6px;line-height:9.6px;color:#fff;font-weight:bold;right:176.20px;">24</div>
<div class="t" style="top:280.57px;font-size:9.6px;line-height:9.6px;color:#fff;font-weight:bold;right:110.40px;">24</div>
<div class="t" style="top:280.57px;font-size:9.6px;line-height:9.6px;color:#fff;font-weight:bold;right:44.20px;">24</div>
<div class="t" style="top:293.94px;font-size:8.7px;line-height:8.7px;color:#2e2e2e;font-style:italic;letter-spacing:0.1px;left:44.40px;">Gross Margin %</div>
<div class="t" style="top:293.68px;font-size:9.0px;line-height:9.0px;color:#2e2e2e;font-style:italic;right:1077.70px;">86%</div>
<div class="t" style="top:293.68px;font-size:9.0px;line-height:9.0px;color:#2e2e2e;font-style:italic;right:1020.20px;">87%</div>
<div class="t" style="top:293.68px;font-size:9.0px;line-height:9.0px;color:#2e2e2e;font-style:italic;right:963.20px;">87%</div>
<div class="t" style="top:293.68px;font-size:9.0px;line-height:9.0px;color:#2e2e2e;font-style:italic;right:905.70px;">88%</div>
<div class="t" style="top:293.68px;font-size:9.0px;line-height:9.0px;color:#2e2e2e;font-style:italic;right:848.20px;">89%</div>
<div class="t" style="top:293.68px;font-size:9.0px;line-height:9.0px;color:#2e2e2e;font-style:italic;right:768.00px;">86%</div>
<div class="t" style="top:293.68px;font-size:9.0px;line-height:9.0px;color:#2e2e2e;font-style:italic;right:702.00px;">86%</div>
<div class="t" style="top:293.68px;font-size:9.0px;line-height:9.0px;color:#2e2e2e;font-style:italic;right:636.70px;">86%</div>
<div class="t" style="top:293.68px;font-size:9.0px;line-height:9.0px;color:#2e2e2e;font-style:italic;right:571.20px;">86%</div>
<div class="t" style="top:293.68px;font-size:9.0px;line-height:9.0px;color:#2e2e2e;font-style:italic;right:505.50px;">86%</div>
<div class="t" style="top:293.68px;font-size:9.0px;line-height:9.0px;color:#2e2e2e;font-style:italic;right:440.20px;">86%</div>
<div class="t" style="top:293.68px;font-size:9.0px;line-height:9.0px;color:#2e2e2e;font-style:italic;right:373.90px;">86%</div>
<div class="t" style="top:293.68px;font-size:9.0px;line-height:9.0px;color:#2e2e2e;font-style:italic;right:308.40px;">86%</div>
<div class="t" style="top:293.68px;font-size:9.0px;line-height:9.0px;color:#2e2e2e;font-style:italic;right:242.60px;">86%</div>
<div class="t" style="top:293.68px;font-size:9.0px;line-height:9.0px;color:#2e2e2e;font-style:italic;right:177.20px;">86%</div>
<div class="t" style="top:293.68px;font-size:9.0px;line-height:9.0px;color:#2e2e2e;font-style:italic;right:111.40px;">86%</div>
<div class="t" style="top:293.68px;font-size:9.0px;line-height:9.0px;color:#2e2e2e;font-style:italic;right:45.20px;">86%</div>
<div class="t" style="top:305.16px;font-size:8.2px;line-height:8.2px;color:#1c1c1c;letter-spacing:0.1px;left:35.60px;">Variable Expenses</div>
<div class="t" style="top:304.65px;font-size:8.8px;line-height:8.8px;color:#1c1c1c;right:1073.30px;">(167)</div>
<div class="t" style="top:304.65px;font-size:8.8px;line-height:8.8px;color:#1c1c1c;right:1015.80px;">(303)</div>
<div class="t" style="top:304.65px;font-size:8.8px;line-height:8.8px;color:#1c1c1c;right:958.80px;">(488)</div>
<div class="t" style="top:304.65px;font-size:8.8px;line-height:8.8px;color:#1c1c1c;right:901.30px;">(718)</div>
<div class="t" style="top:304.65px;font-size:8.8px;line-height:8.8px;color:#1c1c1c;right:843.80px;">(1,067)</div>
<div class="t" style="top:304.65px;font-size:8.8px;line-height:8.8px;color:#1c1c1c;right:763.60px;">(14)</div>
<div class="t" style="top:304.65px;font-size:8.8px;line-height:8.8px;color:#1c1c1c;right:697.60px;">(14)</div>
<div class="t" style="top:304.65px;font-size:8.8px;line-height:8.8px;color:#1c1c1c;right:632.30px;">(14)</div>
<div class="t" style="top:304.65px;font-size:8.8px;line-height:8.8px;color:#1c1c1c;right:566.80px;">(14)</div>
<div class="t" style="top:304.65px;font-size:8.8px;line-height:8.8px;color:#1c1c1c;right:501.10px;">(14)</div>
<div class="t" style="top:304.65px;font-size:8.8px;line-height:8.8px;color:#1c1c1c;right:435.80px;">(14)</div>
<div class="t" style="top:304.65px;font-size:8.8px;line-height:8.8px;color:#1c1c1c;right:369.50px;">(14)</div>
<div class="t" style="top:304.65px;font-size:8.8px;line-height:8.8px;color:#1c1c1c;right:304.00px;">(14)</div>
<div class="t" style="top:304.65px;font-size:8.8px;line-height:8.8px;color:#1c1c1c;right:238.20px;">(14)</div>
<div class="t" style="top:304.65px;font-size:8.8px;line-height:8.8px;color:#1c1c1c;right:172.80px;">(14)</div>
<div class="t" style="top:304.65px;font-size:8.8px;line-height:8.8px;color:#1c1c1c;right:107.00px;">(14)</div>
<div class="t" style="top:304.65px;font-size:8.8px;line-height:8.8px;color:#1c1c1c;right:40.80px;">(14)</div>
<div class="t" style="top:315.54px;font-size:8.7px;line-height:8.7px;color:#2e2e2e;font-style:italic;letter-spacing:0.1px;left:44.40px;">% of Revenue</div>
<div class="t" style="top:315.28px;font-size:9.0px;line-height:9.0px;color:#2e2e2e;font-style:italic;right:1073.70px;">(54%)</div>
<div class="t" style="top:315.28px;font-size:9.0px;line-height:9.0px;color:#2e2e2e;font-style:italic;right:1016.20px;">(30%)</div>
<div class="t" style="top:315.28px;font-size:9.0px;line-height:9.0px;color:#2e2e2e;font-style:italic;right:959.20px;">(17%)</div>
<div class="t" style="top:315.28px;font-size:9.0px;line-height:9.0px;color:#2e2e2e;font-style:italic;right:901.70px;">(12%)</div>
<div class="t" style="top:315.28px;font-size:9.0px;line-height:9.0px;color:#2e2e2e;font-style:italic;right:844.20px;">(8%)</div>
<div class="t" style="top:315.28px;font-size:9.0px;line-height:9.0px;color:#2e2e2e;font-style:italic;right:764.00px;">(67%)</div>
<div class="t" style="top:315.28px;font-size:9.0px;line-height:9.0px;color:#2e2e2e;font-style:italic;right:698.00px;">(63%)</div>
<div class="t" style="top:315.28px;font-size:9.0px;line-height:9.0px;color:#2e2e2e;font-style:italic;right:632.70px;">(59%)</div>
<div class="t" style="top:315.28px;font-size:9.0px;line-height:9.0px;color:#2e2e2e;font-style:italic;right:567.20px;">(56%)</div>
<div class="t" style="top:315.28px;font-size:9.0px;line-height:9.0px;color:#2e2e2e;font-style:italic;right:501.50px;">(53%)</div>
<div class="t" style="top:315.28px;font-size:9.0px;line-height:9.0px;color:#2e2e2e;font-style:italic;right:436.20px;">(51%)</div>
<div class="t" style="top:315.28px;font-size:9.0px;line-height:9.0px;color:#2e2e2e;font-style:italic;right:369.90px;">(51%)</div>
<div class="t" style="top:315.28px;font-size:9.0px;line-height:9.0px;color:#2e2e2e;font-style:italic;right:304.40px;">(51%)</div>
<div class="t" style="top:315.28px;font-size:9.0px;line-height:9.0px;color:#2e2e2e;font-style:italic;right:238.60px;">(51%)</div>
<div class="t" style="top:315.28px;font-size:9.0px;line-height:9.0px;color:#2e2e2e;font-style:italic;right:173.20px;">(51%)</div>
<div class="t" style="top:315.28px;font-size:9.0px;line-height:9.0px;color:#2e2e2e;font-style:italic;right:107.40px;">(51%)</div>
<div class="t" style="top:315.28px;font-size:9.0px;line-height:9.0px;color:#2e2e2e;font-style:italic;right:41.20px;">(51%)</div>
<div class="r" style="left:33.80px;top:324.40px;width:514.20px;height:12.70px;background:#47ade3;"></div>
<div class="r" style="left:562.80px;top:324.40px;width:788.20px;height:12.70px;background:#47ade3;"></div>
<div class="t" style="top:327.07px;font-size:10.2px;line-height:10.2px;color:#fff;font-weight:bold;left:41.00px;">Contribution Margin</div>
<div class="t" style="top:326.27px;font-size:9.6px;line-height:9.6px;color:#fff;font-weight:bold;right:1076.70px;">99</div>
<div class="t" style="top:326.27px;font-size:9.6px;line-height:9.6px;color:#fff;font-weight:bold;right:1019.20px;">583</div>
<div class="t" style="top:326.27px;font-size:9.6px;line-height:9.6px;color:#fff;font-weight:bold;right:962.20px;">2,019</div>
<div class="t" style="top:326.27px;font-size:9.6px;line-height:9.6px;color:#fff;font-weight:bold;right:904.70px;">4,756</div>
<div class="t" style="top:326.27px;font-size:9.6px;line-height:9.6px;color:#fff;font-weight:bold;right:847.20px;">10,368</div>
<div class="t" style="top:326.27px;font-size:9.6px;line-height:9.6px;color:#fff;font-weight:bold;right:767.00px;">4</div>
<div class="t" style="top:326.27px;font-size:9.6px;line-height:9.6px;color:#fff;font-weight:bold;right:701.00px;">5</div>
<div class="t" style="top:326.27px;font-size:9.6px;line-height:9.6px;color:#fff;font-weight:bold;right:635.70px;">6</div>
<div class="t" style="top:326.27px;font-size:9.6px;line-height:9.6px;color:#fff;font-weight:bold;right:570.20px;">7</div>
<div class="t" style="top:326.27px;font-size:9.6px;line-height:9.6px;color:#fff;font-weight:bold;right:504.50px;">9</div>
<div class="t" style="top:326.27px;font-size:9.6px;line-height:9.6px;color:#fff;font-weight:bold;right:439.20px;">10</div>
<div class="t" style="top:326.27px;font-size:9.6px;line-height:9.6px;color:#fff;font-weight:bold;right:372.90px;">10</div>
<div class="t" style="top:326.27px;font-size:9.6px;line-height:9.6px;color:#fff;font-weight:bold;right:307.40px;">10</div>
<div class="t" style="top:326.27px;font-size:9.6px;line-height:9.6px;color:#fff;font-weight:bold;right:241.60px;">10</div>
<div class="t" style="top:326.27px;font-size:9.6px;line-height:9.6px;color:#fff;font-weight:bold;right:176.20px;">10</div>
<div class="t" style="top:326.27px;font-size:9.6px;line-height:9.6px;color:#fff;font-weight:bold;right:110.40px;">10</div>
<div class="t" style="top:326.27px;font-size:9.6px;line-height:9.6px;color:#fff;font-weight:bold;right:44.20px;">10</div>
<div class="t" style="top:339.64px;font-size:8.7px;line-height:8.7px;color:#2e2e2e;font-style:italic;letter-spacing:0.1px;left:44.40px;">Contribution Margin %</div>
<div class="t" style="top:339.38px;font-size:9.0px;line-height:9.0px;color:#2e2e2e;font-style:italic;right:1077.70px;">32%</div>
<div class="t" style="top:339.38px;font-size:9.0px;line-height:9.0px;color:#2e2e2e;font-style:italic;right:1020.20px;">57%</div>
<div class="t" style="top:339.38px;font-size:9.0px;line-height:9.0px;color:#2e2e2e;font-style:italic;right:963.20px;">70%</div>
<div class="t" style="top:339.38px;font-size:9.0px;line-height:9.0px;color:#2e2e2e;font-style:italic;right:905.70px;">76%</div>
<div class="t" style="top:339.38px;font-size:9.0px;line-height:9.0px;color:#2e2e2e;font-style:italic;right:848.20px;">80%</div>
<div class="t" style="top:339.38px;font-size:9.0px;line-height:9.0px;color:#2e2e2e;font-style:italic;right:768.00px;">19%</div>
<div class="t" style="top:339.38px;font-size:9.0px;line-height:9.0px;color:#2e2e2e;font-style:italic;right:702.00px;">23%</div>
<div class="t" style="top:339.38px;font-size:9.0px;line-height:9.0px;color:#2e2e2e;font-style:italic;right:636.70px;">27%</div>
<div class="t" style="top:339.38px;font-size:9.0px;line-height:9.0px;color:#2e2e2e;font-style:italic;right:571.20px;">30%</div>
<div class="t" style="top:339.38px;font-size:9.0px;line-height:9.0px;color:#2e2e2e;font-style:italic;right:505.50px;">33%</div>
<div class="t" style="top:339.38px;font-size:9.0px;line-height:9.0px;color:#2e2e2e;font-style:italic;right:440.20px;">35%</div>
<div class="t" style="top:339.38px;font-size:9.0px;line-height:9.0px;color:#2e2e2e;font-style:italic;right:373.90px;">35%</div>
<div class="t" style="top:339.38px;font-size:9.0px;line-height:9.0px;color:#2e2e2e;font-style:italic;right:308.40px;">35%</div>
<div class="t" style="top:339.38px;font-size:9.0px;line-height:9.0px;color:#2e2e2e;font-style:italic;right:242.60px;">35%</div>
<div class="t" style="top:339.38px;font-size:9.0px;line-height:9.0px;color:#2e2e2e;font-style:italic;right:177.20px;">35%</div>
<div class="t" style="top:339.38px;font-size:9.0px;line-height:9.0px;color:#2e2e2e;font-style:italic;right:111.40px;">35%</div>
<div class="t" style="top:339.38px;font-size:9.0px;line-height:9.0px;color:#2e2e2e;font-style:italic;right:45.20px;">35%</div>
<div class="t" style="top:350.86px;font-size:8.2px;line-height:8.2px;color:#1c1c1c;letter-spacing:0.1px;left:35.60px;">Payroll Expenses</div>
<div class="t" style="top:350.35px;font-size:8.8px;line-height:8.8px;color:#1c1c1c;right:1073.30px;">(174)</div>
<div class="t" style="top:350.35px;font-size:8.8px;line-height:8.8px;color:#1c1c1c;right:1015.80px;">(259)</div>
<div class="t" style="top:350.35px;font-size:8.8px;line-height:8.8px;color:#1c1c1c;right:958.80px;">(360)</div>
<div class="t" style="top:350.35px;font-size:8.8px;line-height:8.8px;color:#1c1c1c;right:901.30px;">(398)</div>
<div class="t" style="top:350.35px;font-size:8.8px;line-height:8.8px;color:#1c1c1c;right:843.80px;">(409)</div>
<div class="t" style="top:350.35px;font-size:8.8px;line-height:8.8px;color:#1c1c1c;right:763.60px;">(15)</div>
<div class="t" style="top:350.35px;font-size:8.8px;line-height:8.8px;color:#1c1c1c;right:697.60px;">(15)</div>
<div class="t" style="top:350.35px;font-size:8.8px;line-height:8.8px;color:#1c1c1c;right:632.30px;">(15)</div>
<div class="t" style="top:350.35px;font-size:8.8px;line-height:8.8px;color:#1c1c1c;right:566.80px;">(15)</div>
<div class="t" style="top:350.35px;font-size:8.8px;line-height:8.8px;color:#1c1c1c;right:501.10px;">(15)</div>
<div class="t" style="top:350.35px;font-size:8.8px;line-height:8.8px;color:#1c1c1c;right:435.80px;">(15)</div>
<div class="t" style="top:350.35px;font-size:8.8px;line-height:8.8px;color:#1c1c1c;right:369.50px;">(15)</div>
<div class="t" style="top:350.35px;font-size:8.8px;line-height:8.8px;color:#1c1c1c;right:304.00px;">(15)</div>
<div class="t" style="top:350.35px;font-size:8.8px;line-height:8.8px;color:#1c1c1c;right:238.20px;">(15)</div>
<div class="t" style="top:350.35px;font-size:8.8px;line-height:8.8px;color:#1c1c1c;right:172.80px;">(15)</div>
<div class="t" style="top:350.35px;font-size:8.8px;line-height:8.8px;color:#1c1c1c;right:107.00px;">(15)</div>
<div class="t" style="top:350.35px;font-size:8.8px;line-height:8.8px;color:#1c1c1c;right:40.80px;">(15)</div>
<div class="t" style="top:361.24px;font-size:8.7px;line-height:8.7px;color:#2e2e2e;font-style:italic;letter-spacing:0.1px;left:44.40px;">% of Revenue</div>
<div class="t" style="top:360.98px;font-size:9.0px;line-height:9.0px;color:#2e2e2e;font-style:italic;right:1073.70px;">(56%)</div>
<div class="t" style="top:360.98px;font-size:9.0px;line-height:9.0px;color:#2e2e2e;font-style:italic;right:1016.20px;">(25%)</div>
<div class="t" style="top:360.98px;font-size:9.0px;line-height:9.0px;color:#2e2e2e;font-style:italic;right:959.20px;">(13%)</div>
<div class="t" style="top:360.98px;font-size:9.0px;line-height:9.0px;color:#2e2e2e;font-style:italic;right:901.70px;">(6%)</div>
<div class="t" style="top:360.98px;font-size:9.0px;line-height:9.0px;color:#2e2e2e;font-style:italic;right:844.20px;">(3%)</div>
<div class="t" style="top:360.98px;font-size:9.0px;line-height:9.0px;color:#2e2e2e;font-style:italic;right:764.00px;">(71%)</div>
<div class="t" style="top:360.98px;font-size:9.0px;line-height:9.0px;color:#2e2e2e;font-style:italic;right:698.00px;">(66%)</div>
<div class="t" style="top:360.98px;font-size:9.0px;line-height:9.0px;color:#2e2e2e;font-style:italic;right:632.70px;">(62%)</div>
<div class="t" style="top:360.98px;font-size:9.0px;line-height:9.0px;color:#2e2e2e;font-style:italic;right:567.20px;">(59%)</div>
<div class="t" style="top:360.98px;font-size:9.0px;line-height:9.0px;color:#2e2e2e;font-style:italic;right:501.50px;">(56%)</div>
<div class="t" style="top:360.98px;font-size:9.0px;line-height:9.0px;color:#2e2e2e;font-style:italic;right:436.20px;">(53%)</div>
<div class="t" style="top:360.98px;font-size:9.0px;line-height:9.0px;color:#2e2e2e;font-style:italic;right:369.90px;">(53%)</div>
<div class="t" style="top:360.98px;font-size:9.0px;line-height:9.0px;color:#2e2e2e;font-style:italic;right:304.40px;">(53%)</div>
<div class="t" style="top:360.98px;font-size:9.0px;line-height:9.0px;color:#2e2e2e;font-style:italic;right:238.60px;">(53%)</div>
<div class="t" style="top:360.98px;font-size:9.0px;line-height:9.0px;color:#2e2e2e;font-style:italic;right:173.20px;">(53%)</div>
<div class="t" style="top:360.98px;font-size:9.0px;line-height:9.0px;color:#2e2e2e;font-style:italic;right:107.40px;">(53%)</div>
<div class="t" style="top:360.98px;font-size:9.0px;line-height:9.0px;color:#2e2e2e;font-style:italic;right:41.20px;">(53%)</div>
<div class="t" style="top:375.16px;font-size:8.2px;line-height:8.2px;color:#1c1c1c;letter-spacing:0.1px;left:35.60px;">Fixed Expenses</div>
<div class="t" style="top:374.65px;font-size:8.8px;line-height:8.8px;color:#1c1c1c;right:1073.30px;">(41)</div>
<div class="t" style="top:374.65px;font-size:8.8px;line-height:8.8px;color:#1c1c1c;right:1015.80px;">(41)</div>
<div class="t" style="top:374.65px;font-size:8.8px;line-height:8.8px;color:#1c1c1c;right:958.80px;">(41)</div>
<div class="t" style="top:374.65px;font-size:8.8px;line-height:8.8px;color:#1c1c1c;right:901.30px;">(41)</div>
<div class="t" style="top:374.65px;font-size:8.8px;line-height:8.8px;color:#1c1c1c;right:843.80px;">(41)</div>
<div class="t" style="top:374.65px;font-size:8.8px;line-height:8.8px;color:#1c1c1c;right:763.60px;">(3)</div>
<div class="t" style="top:374.65px;font-size:8.8px;line-height:8.8px;color:#1c1c1c;right:697.60px;">(3)</div>
<div class="t" style="top:374.65px;font-size:8.8px;line-height:8.8px;color:#1c1c1c;right:632.30px;">(3)</div>
<div class="t" style="top:374.65px;font-size:8.8px;line-height:8.8px;color:#1c1c1c;right:566.80px;">(3)</div>
<div class="t" style="top:374.65px;font-size:8.8px;line-height:8.8px;color:#1c1c1c;right:501.10px;">(3)</div>
<div class="t" style="top:374.65px;font-size:8.8px;line-height:8.8px;color:#1c1c1c;right:435.80px;">(3)</div>
<div class="t" style="top:374.65px;font-size:8.8px;line-height:8.8px;color:#1c1c1c;right:369.50px;">(3)</div>
<div class="t" style="top:374.65px;font-size:8.8px;line-height:8.8px;color:#1c1c1c;right:304.00px;">(3)</div>
<div class="t" style="top:374.65px;font-size:8.8px;line-height:8.8px;color:#1c1c1c;right:238.20px;">(3)</div>
<div class="t" style="top:374.65px;font-size:8.8px;line-height:8.8px;color:#1c1c1c;right:172.80px;">(3)</div>
<div class="t" style="top:374.65px;font-size:8.8px;line-height:8.8px;color:#1c1c1c;right:107.00px;">(3)</div>
<div class="t" style="top:374.65px;font-size:8.8px;line-height:8.8px;color:#1c1c1c;right:40.80px;">(3)</div>
<div class="t" style="top:386.14px;font-size:8.7px;line-height:8.7px;color:#2e2e2e;font-style:italic;letter-spacing:0.1px;left:44.40px;">% of Revenue</div>
<div class="t" style="top:385.88px;font-size:9.0px;line-height:9.0px;color:#2e2e2e;font-style:italic;right:1073.70px;">(13%)</div>
<div class="t" style="top:385.88px;font-size:9.0px;line-height:9.0px;color:#2e2e2e;font-style:italic;right:1016.20px;">(4%)</div>
<div class="t" style="top:385.88px;font-size:9.0px;line-height:9.0px;color:#2e2e2e;font-style:italic;right:959.20px;">(1%)</div>
<div class="t" style="top:385.88px;font-size:9.0px;line-height:9.0px;color:#2e2e2e;font-style:italic;right:901.70px;">(1%)</div>
<div class="t" style="top:385.88px;font-size:9.0px;line-height:9.0px;color:#2e2e2e;font-style:italic;right:844.20px;">(0%)</div>
<div class="t" style="top:385.88px;font-size:9.0px;line-height:9.0px;color:#2e2e2e;font-style:italic;right:764.00px;">(17%)</div>
<div class="t" style="top:385.88px;font-size:9.0px;line-height:9.0px;color:#2e2e2e;font-style:italic;right:698.00px;">(16%)</div>
<div class="t" style="top:385.88px;font-size:9.0px;line-height:9.0px;color:#2e2e2e;font-style:italic;right:632.70px;">(15%)</div>
<div class="t" style="top:385.88px;font-size:9.0px;line-height:9.0px;color:#2e2e2e;font-style:italic;right:567.20px;">(14%)</div>
<div class="t" style="top:385.88px;font-size:9.0px;line-height:9.0px;color:#2e2e2e;font-style:italic;right:501.50px;">(13%)</div>
<div class="t" style="top:385.88px;font-size:9.0px;line-height:9.0px;color:#2e2e2e;font-style:italic;right:436.20px;">(12%)</div>
<div class="t" style="top:385.88px;font-size:9.0px;line-height:9.0px;color:#2e2e2e;font-style:italic;right:369.90px;">(12%)</div>
<div class="t" style="top:385.88px;font-size:9.0px;line-height:9.0px;color:#2e2e2e;font-style:italic;right:304.40px;">(12%)</div>
<div class="t" style="top:385.88px;font-size:9.0px;line-height:9.0px;color:#2e2e2e;font-style:italic;right:238.60px;">(12%)</div>
<div class="t" style="top:385.88px;font-size:9.0px;line-height:9.0px;color:#2e2e2e;font-style:italic;right:173.20px;">(12%)</div>
<div class="t" style="top:385.88px;font-size:9.0px;line-height:9.0px;color:#2e2e2e;font-style:italic;right:107.40px;">(12%)</div>
<div class="t" style="top:385.88px;font-size:9.0px;line-height:9.0px;color:#2e2e2e;font-style:italic;right:41.20px;">(12%)</div>
<div class="r" style="left:33.80px;top:398.10px;width:514.20px;height:11.70px;background:#47ade3;"></div>
<div class="r" style="left:562.80px;top:398.10px;width:788.20px;height:11.70px;background:#47ade3;"></div>
<div class="t" style="top:399.77px;font-size:10.2px;line-height:10.2px;color:#fff;font-weight:bold;left:41.00px;">EBITDA</div>
<div class="t" style="top:398.97px;font-size:9.6px;line-height:9.6px;color:#fff;font-weight:bold;right:1073.30px;">(116)</div>
<div class="t" style="top:398.97px;font-size:9.6px;line-height:9.6px;color:#fff;font-weight:bold;right:1019.20px;">283</div>
<div class="t" style="top:398.97px;font-size:9.6px;line-height:9.6px;color:#fff;font-weight:bold;right:962.20px;">1,617</div>
<div class="t" style="top:398.97px;font-size:9.6px;line-height:9.6px;color:#fff;font-weight:bold;right:904.70px;">4,318</div>
<div class="t" style="top:398.97px;font-size:9.6px;line-height:9.6px;color:#fff;font-weight:bold;right:847.20px;">9,917</div>
<div class="t" style="top:398.97px;font-size:9.6px;line-height:9.6px;color:#fff;font-weight:bold;right:763.60px;">(14)</div>
<div class="t" style="top:398.97px;font-size:9.6px;line-height:9.6px;color:#fff;font-weight:bold;right:697.60px;">(13)</div>
<div class="t" style="top:398.97px;font-size:9.6px;line-height:9.6px;color:#fff;font-weight:bold;right:632.30px;">(12)</div>
<div class="t" style="top:398.97px;font-size:9.6px;line-height:9.6px;color:#fff;font-weight:bold;right:566.80px;">(11)</div>
<div class="t" style="top:398.97px;font-size:9.6px;line-height:9.6px;color:#fff;font-weight:bold;right:501.10px;">(9)</div>
<div class="t" style="top:398.97px;font-size:9.6px;line-height:9.6px;color:#fff;font-weight:bold;right:435.80px;">(8)</div>
<div class="t" style="top:398.97px;font-size:9.6px;line-height:9.6px;color:#fff;font-weight:bold;right:369.50px;">(8)</div>
<div class="t" style="top:398.97px;font-size:9.6px;line-height:9.6px;color:#fff;font-weight:bold;right:304.00px;">(8)</div>
<div class="t" style="top:398.97px;font-size:9.6px;line-height:9.6px;color:#fff;font-weight:bold;right:238.20px;">(8)</div>
<div class="t" style="top:398.97px;font-size:9.6px;line-height:9.6px;color:#fff;font-weight:bold;right:172.80px;">(8)</div>
<div class="t" style="top:398.97px;font-size:9.6px;line-height:9.6px;color:#fff;font-weight:bold;right:107.00px;">(8)</div>
<div class="t" style="top:398.97px;font-size:9.6px;line-height:9.6px;color:#fff;font-weight:bold;right:40.80px;">(8)</div>
<div class="t" style="top:412.74px;font-size:8.7px;line-height:8.7px;color:#2e2e2e;font-style:italic;letter-spacing:0.1px;left:35.60px;">EBITDA %</div>
<div class="t" style="top:412.48px;font-size:9.0px;line-height:9.0px;color:#2e2e2e;font-style:italic;right:1073.70px;">(37%)</div>
<div class="t" style="top:412.48px;font-size:9.0px;line-height:9.0px;color:#2e2e2e;font-style:italic;right:1020.20px;">28%</div>
<div class="t" style="top:412.48px;font-size:9.0px;line-height:9.0px;color:#2e2e2e;font-style:italic;right:963.20px;">56%</div>
<div class="t" style="top:412.48px;font-size:9.0px;line-height:9.0px;color:#2e2e2e;font-style:italic;right:905.70px;">69%</div>
<div class="t" style="top:412.48px;font-size:9.0px;line-height:9.0px;color:#2e2e2e;font-style:italic;right:848.20px;">77%</div>
<div class="t" style="top:412.48px;font-size:9.0px;line-height:9.0px;color:#2e2e2e;font-style:italic;right:764.00px;">(68%)</div>
<div class="t" style="top:412.48px;font-size:9.0px;line-height:9.0px;color:#2e2e2e;font-style:italic;right:698.00px;">(59%)</div>
<div class="t" style="top:412.48px;font-size:9.0px;line-height:9.0px;color:#2e2e2e;font-style:italic;right:632.70px;">(50%)</div>
<div class="t" style="top:412.48px;font-size:9.0px;line-height:9.0px;color:#2e2e2e;font-style:italic;right:567.20px;">(43%)</div>
<div class="t" style="top:412.48px;font-size:9.0px;line-height:9.0px;color:#2e2e2e;font-style:italic;right:501.50px;">(36%)</div>
<div class="t" style="top:412.48px;font-size:9.0px;line-height:9.0px;color:#2e2e2e;font-style:italic;right:436.20px;">(30%)</div>
<div class="t" style="top:412.48px;font-size:9.0px;line-height:9.0px;color:#2e2e2e;font-style:italic;right:369.90px;">(30%)</div>
<div class="t" style="top:412.48px;font-size:9.0px;line-height:9.0px;color:#2e2e2e;font-style:italic;right:304.40px;">(30%)</div>
<div class="t" style="top:412.48px;font-size:9.0px;line-height:9.0px;color:#2e2e2e;font-style:italic;right:238.60px;">(30%)</div>
<div class="t" style="top:412.48px;font-size:9.0px;line-height:9.0px;color:#2e2e2e;font-style:italic;right:173.20px;">(30%)</div>
<div class="t" style="top:412.48px;font-size:9.0px;line-height:9.0px;color:#2e2e2e;font-style:italic;right:107.40px;">(30%)</div>
<div class="t" style="top:412.48px;font-size:9.0px;line-height:9.0px;color:#2e2e2e;font-style:italic;right:41.20px;">(30%)</div>
<div class="t" style="top:423.86px;font-size:8.2px;line-height:8.2px;color:#1c1c1c;letter-spacing:0.1px;left:35.60px;">Depreciation &amp; Amortization</div>
<div class="t" style="top:423.35px;font-size:8.8px;line-height:8.8px;color:#1c1c1c;right:1073.30px;">(5)</div>
<div class="t" style="top:423.35px;font-size:8.8px;line-height:8.8px;color:#1c1c1c;right:1015.80px;">(6)</div>
<div class="t" style="top:423.35px;font-size:8.8px;line-height:8.8px;color:#1c1c1c;right:958.80px;">(6)</div>
<div class="t" style="top:423.35px;font-size:8.8px;line-height:8.8px;color:#1c1c1c;right:901.30px;">(6)</div>
<div class="t" style="top:423.35px;font-size:8.8px;line-height:8.8px;color:#1c1c1c;right:843.80px;">(6)</div>
<div class="t" style="top:423.35px;font-size:8.8px;line-height:8.8px;color:#1c1c1c;right:763.60px;">(0)</div>
<div class="t" style="top:423.35px;font-size:8.8px;line-height:8.8px;color:#1c1c1c;right:697.60px;">(0)</div>
<div class="t" style="top:423.35px;font-size:8.8px;line-height:8.8px;color:#1c1c1c;right:632.30px;">(0)</div>
<div class="t" style="top:423.35px;font-size:8.8px;line-height:8.8px;color:#1c1c1c;right:566.80px;">(0)</div>
<div class="t" style="top:423.35px;font-size:8.8px;line-height:8.8px;color:#1c1c1c;right:501.10px;">(0)</div>
<div class="t" style="top:423.35px;font-size:8.8px;line-height:8.8px;color:#1c1c1c;right:435.80px;">(1)</div>
<div class="t" style="top:423.35px;font-size:8.8px;line-height:8.8px;color:#1c1c1c;right:369.50px;">(1)</div>
<div class="t" style="top:423.35px;font-size:8.8px;line-height:8.8px;color:#1c1c1c;right:304.00px;">(1)</div>
<div class="t" style="top:423.35px;font-size:8.8px;line-height:8.8px;color:#1c1c1c;right:238.20px;">(1)</div>
<div class="t" style="top:423.35px;font-size:8.8px;line-height:8.8px;color:#1c1c1c;right:172.80px;">(1)</div>
<div class="t" style="top:423.35px;font-size:8.8px;line-height:8.8px;color:#1c1c1c;right:107.00px;">(1)</div>
<div class="t" style="top:423.35px;font-size:8.8px;line-height:8.8px;color:#1c1c1c;right:40.80px;">(1)</div>
<div class="t" style="top:434.66px;font-size:8.2px;line-height:8.2px;color:#1c1c1c;letter-spacing:0.1px;left:35.60px;">EBIT</div>
<div class="t" style="top:434.15px;font-size:8.8px;line-height:8.8px;color:#1c1c1c;right:1073.30px;">(121)</div>
<div class="t" style="top:434.15px;font-size:8.8px;line-height:8.8px;color:#1c1c1c;right:1019.20px;">277</div>
<div class="t" style="top:434.15px;font-size:8.8px;line-height:8.8px;color:#1c1c1c;right:962.20px;">1,611</div>
<div class="t" style="top:434.15px;font-size:8.8px;line-height:8.8px;color:#1c1c1c;right:904.70px;">4,312</div>
<div class="t" style="top:434.15px;font-size:8.8px;line-height:8.8px;color:#1c1c1c;right:847.20px;">9,911</div>
<div class="t" style="top:434.15px;font-size:8.8px;line-height:8.8px;color:#1c1c1c;right:763.60px;">(14)</div>
<div class="t" style="top:434.15px;font-size:8.8px;line-height:8.8px;color:#1c1c1c;right:697.60px;">(13)</div>
<div class="t" style="top:434.15px;font-size:8.8px;line-height:8.8px;color:#1c1c1c;right:632.30px;">(12)</div>
<div class="t" style="top:434.15px;font-size:8.8px;line-height:8.8px;color:#1c1c1c;right:566.80px;">(11)</div>
<div class="t" style="top:434.15px;font-size:8.8px;line-height:8.8px;color:#1c1c1c;right:501.10px;">(10)</div>
<div class="t" style="top:434.15px;font-size:8.8px;line-height:8.8px;color:#1c1c1c;right:435.80px;">(9)</div>
<div class="t" style="top:434.15px;font-size:8.8px;line-height:8.8px;color:#1c1c1c;right:369.50px;">(9)</div>
<div class="t" style="top:434.15px;font-size:8.8px;line-height:8.8px;color:#1c1c1c;right:304.00px;">(9)</div>
<div class="t" style="top:434.15px;font-size:8.8px;line-height:8.8px;color:#1c1c1c;right:238.20px;">(9)</div>
<div class="t" style="top:434.15px;font-size:8.8px;line-height:8.8px;color:#1c1c1c;right:172.80px;">(9)</div>
<div class="t" style="top:434.15px;font-size:8.8px;line-height:8.8px;color:#1c1c1c;right:107.00px;">(9)</div>
<div class="t" style="top:434.15px;font-size:8.8px;line-height:8.8px;color:#1c1c1c;right:40.80px;">(9)</div>
<div class="t" style="top:445.66px;font-size:8.2px;line-height:8.2px;color:#1c1c1c;letter-spacing:0.1px;left:35.60px;">Net Interest Expense</div>
<div class="t" style="top:445.15px;font-size:8.8px;line-height:8.8px;color:#1c1c1c;right:1073.30px;">(18)</div>
<div class="t" style="top:445.15px;font-size:8.8px;line-height:8.8px;color:#1c1c1c;right:1015.80px;">(17)</div>
<div class="t" style="top:445.15px;font-size:8.8px;line-height:8.8px;color:#1c1c1c;right:958.80px;">(14)</div>
<div class="t" style="top:445.15px;font-size:8.8px;line-height:8.8px;color:#1c1c1c;right:901.30px;">(11)</div>
<div class="t" style="top:445.15px;font-size:8.8px;line-height:8.8px;color:#1c1c1c;right:843.80px;">(7)</div>
<div class="t" style="top:445.15px;font-size:8.8px;line-height:8.8px;color:#1c1c1c;right:763.60px;">(1)</div>
<div class="t" style="top:445.15px;font-size:8.8px;line-height:8.8px;color:#1c1c1c;right:697.60px;">(1)</div>
<div class="t" style="top:445.15px;font-size:8.8px;line-height:8.8px;color:#1c1c1c;right:632.30px;">(2)</div>
<div class="t" style="top:445.15px;font-size:8.8px;line-height:8.8px;color:#1c1c1c;right:566.80px;">(2)</div>
<div class="t" style="top:445.15px;font-size:8.8px;line-height:8.8px;color:#1c1c1c;right:501.10px;">(2)</div>
<div class="t" style="top:445.15px;font-size:8.8px;line-height:8.8px;color:#1c1c1c;right:435.80px;">(2)</div>
<div class="t" style="top:445.15px;font-size:8.8px;line-height:8.8px;color:#1c1c1c;right:369.50px;">(2)</div>
<div class="t" style="top:445.15px;font-size:8.8px;line-height:8.8px;color:#1c1c1c;right:304.00px;">(2)</div>
<div class="t" style="top:445.15px;font-size:8.8px;line-height:8.8px;color:#1c1c1c;right:238.20px;">(2)</div>
<div class="t" style="top:445.15px;font-size:8.8px;line-height:8.8px;color:#1c1c1c;right:172.80px;">(2)</div>
<div class="t" style="top:445.15px;font-size:8.8px;line-height:8.8px;color:#1c1c1c;right:107.00px;">(2)</div>
<div class="t" style="top:445.15px;font-size:8.8px;line-height:8.8px;color:#1c1c1c;right:40.80px;">(2)</div>
<div class="t" style="top:456.46px;font-size:8.2px;line-height:8.2px;color:#1c1c1c;letter-spacing:0.1px;left:35.60px;">Net Profit Before Tax</div>
<div class="t" style="top:455.95px;font-size:8.8px;line-height:8.8px;color:#1c1c1c;right:1073.30px;">(139)</div>
<div class="t" style="top:455.95px;font-size:8.8px;line-height:8.8px;color:#1c1c1c;right:1019.20px;">260</div>
<div class="t" style="top:455.95px;font-size:8.8px;line-height:8.8px;color:#1c1c1c;right:962.20px;">1,597</div>
<div class="t" style="top:455.95px;font-size:8.8px;line-height:8.8px;color:#1c1c1c;right:904.70px;">4,301</div>
<div class="t" style="top:455.95px;font-size:8.8px;line-height:8.8px;color:#1c1c1c;right:847.20px;">9,904</div>
<div class="t" style="top:455.95px;font-size:8.8px;line-height:8.8px;color:#1c1c1c;right:763.60px;">(15)</div>
<div class="t" style="top:455.95px;font-size:8.8px;line-height:8.8px;color:#1c1c1c;right:697.60px;">(14)</div>
<div class="t" style="top:455.95px;font-size:8.8px;line-height:8.8px;color:#1c1c1c;right:632.30px;">(14)</div>
<div class="t" style="top:455.95px;font-size:8.8px;line-height:8.8px;color:#1c1c1c;right:566.80px;">(13)</div>
<div class="t" style="top:455.95px;font-size:8.8px;line-height:8.8px;color:#1c1c1c;right:501.10px;">(11)</div>
<div class="t" style="top:455.95px;font-size:8.8px;line-height:8.8px;color:#1c1c1c;right:435.80px;">(10)</div>
<div class="t" style="top:455.95px;font-size:8.8px;line-height:8.8px;color:#1c1c1c;right:369.50px;">(10)</div>
<div class="t" style="top:455.95px;font-size:8.8px;line-height:8.8px;color:#1c1c1c;right:304.00px;">(10)</div>
<div class="t" style="top:455.95px;font-size:8.8px;line-height:8.8px;color:#1c1c1c;right:238.20px;">(10)</div>
<div class="t" style="top:455.95px;font-size:8.8px;line-height:8.8px;color:#1c1c1c;right:172.80px;">(10)</div>
<div class="t" style="top:455.95px;font-size:8.8px;line-height:8.8px;color:#1c1c1c;right:107.00px;">(10)</div>
<div class="t" style="top:455.95px;font-size:8.8px;line-height:8.8px;color:#1c1c1c;right:40.80px;">(10)</div>
<div class="t" style="top:467.16px;font-size:8.2px;line-height:8.2px;color:#1c1c1c;letter-spacing:0.1px;left:35.60px;">Tax Expense</div>
<div class="t" style="top:466.65px;font-size:8.8px;line-height:8.8px;color:#1c1c1c;right:1077.50px;">-</div>
<div class="t" style="top:466.65px;font-size:8.8px;line-height:8.8px;color:#1c1c1c;right:1015.80px;">(65)</div>
<div class="t" style="top:466.65px;font-size:8.8px;line-height:8.8px;color:#1c1c1c;right:958.80px;">(399)</div>
<div class="t" style="top:466.65px;font-size:8.8px;line-height:8.8px;color:#1c1c1c;right:901.30px;">(1,075)</div>
<div class="t" style="top:466.65px;font-size:8.8px;line-height:8.8px;color:#1c1c1c;right:843.80px;">(2,476)</div>
<div class="t" style="top:466.65px;font-size:8.8px;line-height:8.8px;color:#1c1c1c;right:767.80px;">-</div>
<div class="t" style="top:466.65px;font-size:8.8px;line-height:8.8px;color:#1c1c1c;right:701.80px;">-</div>
<div class="t" style="top:466.65px;font-size:8.8px;line-height:8.8px;color:#1c1c1c;right:636.50px;">-</div>
<div class="t" style="top:466.65px;font-size:8.8px;line-height:8.8px;color:#1c1c1c;right:571.00px;">-</div>
<div class="t" style="top:466.65px;font-size:8.8px;line-height:8.8px;color:#1c1c1c;right:505.30px;">-</div>
<div class="t" style="top:466.65px;font-size:8.8px;line-height:8.8px;color:#1c1c1c;right:440.00px;">-</div>
<div class="t" style="top:466.65px;font-size:8.8px;line-height:8.8px;color:#1c1c1c;right:373.70px;">-</div>
<div class="t" style="top:466.65px;font-size:8.8px;line-height:8.8px;color:#1c1c1c;right:308.20px;">-</div>
<div class="t" style="top:466.65px;font-size:8.8px;line-height:8.8px;color:#1c1c1c;right:242.40px;">-</div>
<div class="t" style="top:466.65px;font-size:8.8px;line-height:8.8px;color:#1c1c1c;right:177.00px;">-</div>
<div class="t" style="top:466.65px;font-size:8.8px;line-height:8.8px;color:#1c1c1c;right:111.20px;">-</div>
<div class="t" style="top:466.65px;font-size:8.8px;line-height:8.8px;color:#1c1c1c;right:45.00px;">-</div>
<div class="r" style="left:33.80px;top:475.60px;width:514.20px;height:12.10px;background:#47ade3;"></div>
<div class="r" style="left:562.80px;top:475.60px;width:788.20px;height:12.10px;background:#47ade3;"></div>
<div class="t" style="top:477.67px;font-size:10.2px;line-height:10.2px;color:#fff;font-weight:bold;left:41.00px;">Net Profit After Tax</div>
<div class="t" style="top:476.87px;font-size:9.6px;line-height:9.6px;color:#fff;font-weight:bold;right:1073.30px;">(139)</div>
<div class="t" style="top:476.87px;font-size:9.6px;line-height:9.6px;color:#fff;font-weight:bold;right:1019.20px;">195</div>
<div class="t" style="top:476.87px;font-size:9.6px;line-height:9.6px;color:#fff;font-weight:bold;right:962.20px;">1,198</div>
<div class="t" style="top:476.87px;font-size:9.6px;line-height:9.6px;color:#fff;font-weight:bold;right:904.70px;">3,226</div>
<div class="t" style="top:476.87px;font-size:9.6px;line-height:9.6px;color:#fff;font-weight:bold;right:847.20px;">7,428</div>
<div class="t" style="top:476.87px;font-size:9.6px;line-height:9.6px;color:#fff;font-weight:bold;right:763.60px;">(15)</div>
<div class="t" style="top:476.87px;font-size:9.6px;line-height:9.6px;color:#fff;font-weight:bold;right:697.60px;">(14)</div>
<div class="t" style="top:476.87px;font-size:9.6px;line-height:9.6px;color:#fff;font-weight:bold;right:632.30px;">(14)</div>
<div class="t" style="top:476.87px;font-size:9.6px;line-height:9.6px;color:#fff;font-weight:bold;right:566.80px;">(13)</div>
<div class="t" style="top:476.87px;font-size:9.6px;line-height:9.6px;color:#fff;font-weight:bold;right:501.10px;">(11)</div>
<div class="t" style="top:476.87px;font-size:9.6px;line-height:9.6px;color:#fff;font-weight:bold;right:435.80px;">(10)</div>
<div class="t" style="top:476.87px;font-size:9.6px;line-height:9.6px;color:#fff;font-weight:bold;right:369.50px;">(10)</div>
<div class="t" style="top:476.87px;font-size:9.6px;line-height:9.6px;color:#fff;font-weight:bold;right:304.00px;">(10)</div>
<div class="t" style="top:476.87px;font-size:9.6px;line-height:9.6px;color:#fff;font-weight:bold;right:238.20px;">(10)</div>
<div class="t" style="top:476.87px;font-size:9.6px;line-height:9.6px;color:#fff;font-weight:bold;right:172.80px;">(10)</div>
<div class="t" style="top:476.87px;font-size:9.6px;line-height:9.6px;color:#fff;font-weight:bold;right:107.00px;">(10)</div>
<div class="t" style="top:476.87px;font-size:9.6px;line-height:9.6px;color:#fff;font-weight:bold;right:40.80px;">(10)</div>
<div class="t" style="top:490.04px;font-size:8.7px;line-height:8.7px;color:#2e2e2e;font-style:italic;letter-spacing:0.1px;left:44.40px;">Net Profit After Tax %</div>
<div class="t" style="top:489.78px;font-size:9.0px;line-height:9.0px;color:#2e2e2e;font-style:italic;right:1073.70px;">(45%)</div>
<div class="t" style="top:489.78px;font-size:9.0px;line-height:9.0px;color:#2e2e2e;font-style:italic;right:1020.20px;">19%</div>
<div class="t" style="top:489.78px;font-size:9.0px;line-height:9.0px;color:#2e2e2e;font-style:italic;right:963.20px;">42%</div>
<div class="t" style="top:489.78px;font-size:9.0px;line-height:9.0px;color:#2e2e2e;font-style:italic;right:905.70px;">52%</div>
<div class="t" style="top:489.78px;font-size:9.0px;line-height:9.0px;color:#2e2e2e;font-style:italic;right:848.20px;">57%</div>
<div class="t" style="top:489.78px;font-size:9.0px;line-height:9.0px;color:#2e2e2e;font-style:italic;right:764.00px;">(74%)</div>
<div class="t" style="top:489.78px;font-size:9.0px;line-height:9.0px;color:#2e2e2e;font-style:italic;right:698.00px;">(64%)</div>
<div class="t" style="top:489.78px;font-size:9.0px;line-height:9.0px;color:#2e2e2e;font-style:italic;right:632.70px;">(58%)</div>
<div class="t" style="top:489.78px;font-size:9.0px;line-height:9.0px;color:#2e2e2e;font-style:italic;right:567.20px;">(51%)</div>
<div class="t" style="top:489.78px;font-size:9.0px;line-height:9.0px;color:#2e2e2e;font-style:italic;right:501.50px;">(44%)</div>
<div class="t" style="top:489.78px;font-size:9.0px;line-height:9.0px;color:#2e2e2e;font-style:italic;right:436.20px;">(38%)</div>
<div class="t" style="top:489.78px;font-size:9.0px;line-height:9.0px;color:#2e2e2e;font-style:italic;right:369.90px;">(38%)</div>
<div class="t" style="top:489.78px;font-size:9.0px;line-height:9.0px;color:#2e2e2e;font-style:italic;right:304.40px;">(38%)</div>
<div class="t" style="top:489.78px;font-size:9.0px;line-height:9.0px;color:#2e2e2e;font-style:italic;right:238.60px;">(37%)</div>
<div class="t" style="top:489.78px;font-size:9.0px;line-height:9.0px;color:#2e2e2e;font-style:italic;right:173.20px;">(37%)</div>
<div class="t" style="top:489.78px;font-size:9.0px;line-height:9.0px;color:#2e2e2e;font-style:italic;right:107.40px;">(37%)</div>
<div class="t" style="top:489.78px;font-size:9.0px;line-height:9.0px;color:#2e2e2e;font-style:italic;right:41.20px;">(37%)</div>
<div class="r" style="left:33.80px;top:510.00px;width:514.20px;height:17.00px;background:#4d4dd1;"></div>
<div class="r" style="left:562.80px;top:510.00px;width:788.20px;height:17.00px;background:#4d4dd1;"></div>
<div class="t" style="top:512.06px;font-size:13.4px;line-height:13.4px;color:#fff;font-weight:bold;letter-spacing:0.7px;left:-9.10px;width:600px;text-align:center;">Income Statement ($'000) - 5 years to December 2030</div>
<div class="t" style="top:512.06px;font-size:13.4px;line-height:13.4px;color:#fff;font-weight:bold;letter-spacing:0.7px;left:656.90px;width:600px;text-align:center;">Income Statement ($'000) - 2026</div>
<div class="r" style="left:33.80px;top:748.00px;width:514.20px;height:16.50px;background:#4d4dd1;"></div>
<div class="r" style="left:562.80px;top:748.00px;width:788.20px;height:16.50px;background:#4d4dd1;"></div>
<div class="t" style="top:749.56px;font-size:13.4px;line-height:13.4px;color:#fff;font-weight:bold;letter-spacing:0.7px;left:-9.10px;width:600px;text-align:center;">Balance Sheet ($'000) - 5 years to December 2030</div>
<div class="t" style="top:749.56px;font-size:13.4px;line-height:13.4px;color:#fff;font-weight:bold;letter-spacing:0.7px;left:656.90px;width:600px;text-align:center;">Balance Sheet ($'000) - 2026</div>
<div class="r" style="left:33.80px;top:767.40px;width:514.20px;height:10.60px;background:#6e6ee3;"></div>
<div class="r" style="left:562.80px;top:767.40px;width:788.20px;height:10.60px;background:#6e6ee3;"></div>
<div class="t" style="top:769.35px;font-size:8.8px;line-height:8.8px;color:#fff;font-weight:bold;left:40.00px;">Year Ending</div>
<div class="r" style="left:260.00px;top:767.40px;width:1.00px;height:10.60px;background:#a9a9f0;"></div>
<div class="t" style="top:769.18px;font-size:9px;line-height:9px;color:#fff;font-weight:bold;left:259.50px;width:60px;text-align:center;">2026</div>
<div class="r" style="left:318.00px;top:767.40px;width:1.00px;height:10.60px;background:#a9a9f0;"></div>
<div class="t" style="top:769.18px;font-size:9px;line-height:9px;color:#fff;font-weight:bold;left:317.25px;width:60px;text-align:center;">2027</div>
<div class="r" style="left:375.50px;top:767.40px;width:1.00px;height:10.60px;background:#a9a9f0;"></div>
<div class="t" style="top:769.18px;font-size:9px;line-height:9px;color:#fff;font-weight:bold;left:374.50px;width:60px;text-align:center;">2028</div>
<div class="r" style="left:432.50px;top:767.40px;width:1.00px;height:10.60px;background:#a9a9f0;"></div>
<div class="t" style="top:769.18px;font-size:9px;line-height:9px;color:#fff;font-weight:bold;left:431.75px;width:60px;text-align:center;">2029</div>
<div class="r" style="left:490.00px;top:767.40px;width:1.00px;height:10.60px;background:#a9a9f0;"></div>
<div class="t" style="top:769.18px;font-size:9px;line-height:9px;color:#fff;font-weight:bold;left:489.25px;width:60px;text-align:center;">2030</div>
<div class="t" style="top:769.18px;font-size:9px;line-height:9px;color:#fff;font-weight:bold;left:565.60px;width:60px;text-align:center;">Jan</div>
<div class="r" style="left:627.70px;top:767.40px;width:1.00px;height:10.60px;background:#a9a9f0;"></div>
<div class="t" style="top:769.18px;font-size:9px;line-height:9px;color:#fff;font-weight:bold;left:631.20px;width:60px;text-align:center;">Feb</div>
<div class="r" style="left:693.70px;top:767.40px;width:1.00px;height:10.60px;background:#a9a9f0;"></div>
<div class="t" style="top:769.18px;font-size:9px;line-height:9px;color:#fff;font-weight:bold;left:696.85px;width:60px;text-align:center;">Mar</div>
<div class="r" style="left:759.00px;top:767.40px;width:1.00px;height:10.60px;background:#a9a9f0;"></div>
<div class="t" style="top:769.18px;font-size:9px;line-height:9px;color:#fff;font-weight:bold;left:762.25px;width:60px;text-align:center;">Apr</div>
<div class="r" style="left:824.50px;top:767.40px;width:1.00px;height:10.60px;background:#a9a9f0;"></div>
<div class="t" style="top:769.18px;font-size:9px;line-height:9px;color:#fff;font-weight:bold;left:827.85px;width:60px;text-align:center;">May</div>
<div class="r" style="left:890.20px;top:767.40px;width:1.00px;height:10.60px;background:#a9a9f0;"></div>
<div class="t" style="top:769.18px;font-size:9px;line-height:9px;color:#fff;font-weight:bold;left:893.35px;width:60px;text-align:center;">Jun</div>
<div class="r" style="left:955.50px;top:767.40px;width:1.00px;height:10.60px;background:#a9a9f0;"></div>
<div class="t" style="top:769.18px;font-size:9px;line-height:9px;color:#fff;font-weight:bold;left:959.15px;width:60px;text-align:center;">Jul</div>
<div class="r" style="left:1021.80px;top:767.40px;width:1.00px;height:10.60px;background:#a9a9f0;"></div>
<div class="t" style="top:769.18px;font-size:9px;line-height:9px;color:#fff;font-weight:bold;left:1025.05px;width:60px;text-align:center;">Aug</div>
<div class="r" style="left:1087.30px;top:767.40px;width:1.00px;height:10.60px;background:#a9a9f0;"></div>
<div class="t" style="top:769.18px;font-size:9px;line-height:9px;color:#fff;font-weight:bold;left:1090.70px;width:60px;text-align:center;">Sep</div>
<div class="r" style="left:1153.10px;top:767.40px;width:1.00px;height:10.60px;background:#a9a9f0;"></div>
<div class="t" style="top:769.18px;font-size:9px;line-height:9px;color:#fff;font-weight:bold;left:1156.30px;width:60px;text-align:center;">Oct</div>
<div class="r" style="left:1218.50px;top:767.40px;width:1.00px;height:10.60px;background:#a9a9f0;"></div>
<div class="t" style="top:769.18px;font-size:9px;line-height:9px;color:#fff;font-weight:bold;left:1221.90px;width:60px;text-align:center;">Nov</div>
<div class="r" style="left:1284.30px;top:767.40px;width:1.00px;height:10.60px;background:#a9a9f0;"></div>
<div class="t" style="top:769.18px;font-size:9px;line-height:9px;color:#fff;font-weight:bold;left:1287.90px;width:60px;text-align:center;">Dec</div>
<div class="t" style="top:782.27px;font-size:8.3px;line-height:8.3px;color:#1c1c1c;left:35.60px;">Current Assets</div>
<div class="t" style="top:781.85px;font-size:8.8px;line-height:8.8px;color:#1c1c1c;right:1076.70px;">805</div>
<div class="t" style="top:781.85px;font-size:8.8px;line-height:8.8px;color:#1c1c1c;right:1019.20px;">974</div>
<div class="t" style="top:781.85px;font-size:8.8px;line-height:8.8px;color:#1c1c1c;right:962.20px;">2,154</div>
<div class="t" style="top:781.85px;font-size:8.8px;line-height:8.8px;color:#1c1c1c;right:904.70px;">5,364</div>
<div class="t" style="top:781.85px;font-size:8.8px;line-height:8.8px;color:#1c1c1c;right:847.20px;">12,796</div>
<div class="t" style="top:781.85px;font-size:8.8px;line-height:8.8px;color:#1c1c1c;right:767.00px;">893</div>
<div class="t" style="top:781.85px;font-size:8.8px;line-height:8.8px;color:#1c1c1c;right:701.00px;">869</div>
<div class="t" style="top:781.85px;font-size:8.8px;line-height:8.8px;color:#1c1c1c;right:635.70px;">937</div>
<div class="t" style="top:781.85px;font-size:8.8px;line-height:8.8px;color:#1c1c1c;right:570.20px;">912</div>
<div class="t" style="top:781.85px;font-size:8.8px;line-height:8.8px;color:#1c1c1c;right:504.50px;">889</div>
<div class="t" style="top:781.85px;font-size:8.8px;line-height:8.8px;color:#1c1c1c;right:439.20px;">875</div>
<div class="t" style="top:781.85px;font-size:8.8px;line-height:8.8px;color:#1c1c1c;right:372.90px;">862</div>
<div class="t" style="top:781.85px;font-size:8.8px;line-height:8.8px;color:#1c1c1c;right:307.40px;">850</div>
<div class="t" style="top:781.85px;font-size:8.8px;line-height:8.8px;color:#1c1c1c;right:241.60px;">840</div>
<div class="t" style="top:781.85px;font-size:8.8px;line-height:8.8px;color:#1c1c1c;right:176.20px;">828</div>
<div class="t" style="top:781.85px;font-size:8.8px;line-height:8.8px;color:#1c1c1c;right:110.40px;">817</div>
<div class="t" style="top:781.85px;font-size:8.8px;line-height:8.8px;color:#1c1c1c;right:44.20px;">805</div>
<div class="t" style="top:794.47px;font-size:8.3px;line-height:8.3px;color:#1c1c1c;left:35.60px;">Non-Current Assets</div>
<div class="t" style="top:794.05px;font-size:8.8px;line-height:8.8px;color:#1c1c1c;right:1076.70px;">57</div>
<div class="t" style="top:794.05px;font-size:8.8px;line-height:8.8px;color:#1c1c1c;right:1019.20px;">51</div>
<div class="t" style="top:794.05px;font-size:8.8px;line-height:8.8px;color:#1c1c1c;right:962.20px;">45</div>
<div class="t" style="top:794.05px;font-size:8.8px;line-height:8.8px;color:#1c1c1c;right:904.70px;">38</div>
<div class="t" style="top:794.05px;font-size:8.8px;line-height:8.8px;color:#1c1c1c;right:847.20px;">32</div>
<div class="t" style="top:794.05px;font-size:8.8px;line-height:8.8px;color:#1c1c1c;right:767.00px;">9</div>
<div class="t" style="top:794.05px;font-size:8.8px;line-height:8.8px;color:#1c1c1c;right:701.00px;">20</div>
<div class="t" style="top:794.05px;font-size:8.8px;line-height:8.8px;color:#1c1c1c;right:635.70px;">35</div>
<div class="t" style="top:794.05px;font-size:8.8px;line-height:8.8px;color:#1c1c1c;right:570.20px;">47</div>
<div class="t" style="top:794.05px;font-size:8.8px;line-height:8.8px;color:#1c1c1c;right:504.50px;">56</div>
<div class="t" style="top:794.05px;font-size:8.8px;line-height:8.8px;color:#1c1c1c;right:439.20px;">59</div>
<div class="t" style="top:794.05px;font-size:8.8px;line-height:8.8px;color:#1c1c1c;right:372.90px;">60</div>
<div class="t" style="top:794.05px;font-size:8.8px;line-height:8.8px;color:#1c1c1c;right:307.40px;">59</div>
<div class="t" style="top:794.05px;font-size:8.8px;line-height:8.8px;color:#1c1c1c;right:241.60px;">59</div>
<div class="t" style="top:794.05px;font-size:8.8px;line-height:8.8px;color:#1c1c1c;right:176.20px;">58</div>
<div class="t" style="top:794.05px;font-size:8.8px;line-height:8.8px;color:#1c1c1c;right:110.40px;">57</div>
<div class="t" style="top:794.05px;font-size:8.8px;line-height:8.8px;color:#1c1c1c;right:44.20px;">57</div>
<svg style="left:0;top:0" width="1390" height="844"><line x1="33.5" y1="555.50" x2="499.5" y2="555.50" stroke="#7cc8ee" stroke-width="1"/><line x1="33.5" y1="575.50" x2="499.5" y2="575.50" stroke="#7cc8ee" stroke-width="1"/><line x1="33.5" y1="595.50" x2="499.5" y2="595.50" stroke="#7cc8ee" stroke-width="1"/><line x1="33.5" y1="615.50" x2="499.5" y2="615.50" stroke="#7cc8ee" stroke-width="1"/><line x1="33.5" y1="635.50" x2="499.5" y2="635.50" stroke="#7cc8ee" stroke-width="1"/><line x1="33.5" y1="656.50" x2="499.5" y2="656.50" stroke="#7cc8ee" stroke-width="1"/><line x1="33.5" y1="676.50" x2="499.5" y2="676.50" stroke="#7cc8ee" stroke-width="1"/><line x1="33.5" y1="696.50" x2="499.5" y2="696.50" stroke="#8d8fe0" stroke-width="1"/><line x1="33.5" y1="716.50" x2="499.5" y2="716.50" stroke="#7cc8ee" stroke-width="1"/><line x1="33.50" y1="555.5" x2="33.50" y2="716.5" stroke="#7cc8ee" stroke-width="1"/><line x1="126.50" y1="555.5" x2="126.50" y2="716.5" stroke="#7cc8ee" stroke-width="1"/><line x1="220.50" y1="555.5" x2="220.50" y2="716.5" stroke="#7cc8ee" stroke-width="1"/><line x1="313.50" y1="555.5" x2="313.50" y2="716.5" stroke="#7cc8ee" stroke-width="1"/><line x1="406.50" y1="555.5" x2="406.50" y2="716.5" stroke="#7cc8ee" stroke-width="1"/><line x1="499.50" y1="555.5" x2="499.50" y2="716.5" stroke="#7cc8ee" stroke-width="1.6"/><polyline points="80.28,693.17 173.44,686.00 266.60,667.39 359.76,633.66 452.92,566.36" fill="none" stroke="#f07a6b" stroke-width="1.7" stroke-linejoin="round"/><circle cx="80.28" cy="693.17" r="2.5" fill="#f07a6b"/><circle cx="173.44" cy="686.00" r="2.5" fill="#f07a6b"/><circle cx="266.60" cy="667.39" r="2.5" fill="#f07a6b"/><circle cx="359.76" cy="633.66" r="2.5" fill="#f07a6b"/><circle cx="452.92" cy="566.36" r="2.5" fill="#f07a6b"/><polyline points="80.28,697.45 173.44,693.44 266.60,680.03 359.76,652.86 452.92,596.56" fill="none" stroke="#5d9c3b" stroke-width="1.7" stroke-linejoin="round"/><circle cx="80.28" cy="697.45" r="2.5" fill="#5d9c3b"/><circle cx="173.44" cy="693.44" r="2.5" fill="#5d9c3b"/><circle cx="266.60" cy="680.03" r="2.5" fill="#5d9c3b"/><circle cx="359.76" cy="652.86" r="2.5" fill="#5d9c3b"/><circle cx="452.92" cy="596.56" r="2.5" fill="#5d9c3b"/><polyline points="80.28,697.69 173.44,694.33 266.60,684.24 359.76,663.85 452.92,621.59" fill="none" stroke="#4a4ad6" stroke-width="1.7" stroke-linejoin="round"/><circle cx="80.28" cy="697.69" r="2.5" fill="#4a4ad6"/><circle cx="173.44" cy="694.33" r="2.5" fill="#4a4ad6"/><circle cx="266.60" cy="684.24" r="2.5" fill="#4a4ad6"/><circle cx="359.76" cy="663.85" r="2.5" fill="#4a4ad6"/><circle cx="452.92" cy="621.59" r="2.5" fill="#4a4ad6"/><line x1="157.3" y1="541.7" x2="178.9" y2="541.7" stroke="#f07a6b" stroke-width="1.8"/><circle cx="167.8" cy="541.7" r="1.9" fill="#f07a6b"/><line x1="234.8" y1="541.7" x2="256.40000000000003" y2="541.7" stroke="#5d9c3b" stroke-width="1.8"/><circle cx="245.3" cy="541.7" r="1.9" fill="#5d9c3b"/><line x1="312.4" y1="541.7" x2="334.0" y2="541.7" stroke="#4a4ad6" stroke-width="1.8"/><circle cx="322.9" cy="541.7" r="1.9" fill="#4a4ad6"/></svg>
<div class="t" style="top:550.77px;font-size:9.6px;line-height:9.6px;color:#1a1a1a;font-weight:bold;letter-spacing:0.35px;left:511.00px;">14,000</div>
<div class="t" style="top:570.89px;font-size:9.6px;line-height:9.6px;color:#1a1a1a;font-weight:bold;letter-spacing:0.35px;left:511.00px;">12,000</div>
<div class="t" style="top:591.00px;font-size:9.6px;line-height:9.6px;color:#1a1a1a;font-weight:bold;letter-spacing:0.35px;left:511.00px;">10,000</div>
<div class="t" style="top:611.11px;font-size:9.6px;line-height:9.6px;color:#1a1a1a;font-weight:bold;letter-spacing:0.35px;left:511.00px;">8,000</div>
<div class="t" style="top:631.22px;font-size:9.6px;line-height:9.6px;color:#1a1a1a;font-weight:bold;letter-spacing:0.35px;left:511.00px;">6,000</div>
<div class="t" style="top:651.34px;font-size:9.6px;line-height:9.6px;color:#1a1a1a;font-weight:bold;letter-spacing:0.35px;left:511.00px;">4,000</div>
<div class="t" style="top:671.45px;font-size:9.6px;line-height:9.6px;color:#1a1a1a;font-weight:bold;letter-spacing:0.35px;left:511.00px;">2,000</div>
<div class="t" style="top:691.56px;font-size:9.6px;line-height:9.6px;color:#1a1a1a;font-weight:bold;letter-spacing:0.35px;left:511.00px;">-</div>
<div class="t" style="top:711.67px;font-size:9.6px;line-height:9.6px;color:#1a1a1a;font-weight:bold;letter-spacing:0.35px;left:508.20px;">(2,000)</div>
<div class="t" style="top:724.04px;font-size:9.4px;line-height:9.4px;color:#1a1a1a;font-weight:bold;letter-spacing:0.45px;left:50.28px;width:60px;text-align:center;">2026</div>
<div class="t" style="top:724.04px;font-size:9.4px;line-height:9.4px;color:#1a1a1a;font-weight:bold;letter-spacing:0.45px;left:143.44px;width:60px;text-align:center;">2027</div>
<div class="t" style="top:724.04px;font-size:9.4px;line-height:9.4px;color:#1a1a1a;font-weight:bold;letter-spacing:0.45px;left:236.60px;width:60px;text-align:center;">2028</div>
<div class="t" style="top:724.04px;font-size:9.4px;line-height:9.4px;color:#1a1a1a;font-weight:bold;letter-spacing:0.45px;left:329.76px;width:60px;text-align:center;">2029</div>
<div class="t" style="top:724.04px;font-size:9.4px;line-height:9.4px;color:#1a1a1a;font-weight:bold;letter-spacing:0.45px;left:422.92px;width:60px;text-align:center;">2030</div>
<div class="t" style="top:538.38px;font-size:9px;line-height:9px;color:#1a1a1a;font-weight:bold;letter-spacing:0.3px;left:181.40px;">Revenue</div>
<div class="t" style="top:538.38px;font-size:9px;line-height:9px;color:#1a1a1a;font-weight:bold;letter-spacing:0.3px;left:260.90px;">EBITDA</div>
<div class="t" style="top:538.38px;font-size:9px;line-height:9px;color:#1a1a1a;font-weight:bold;letter-spacing:0.3px;left:338.60px;">Net Profit After Tax</div>
<svg style="left:0;top:0" width="1390" height="844"><line x1="562.5" y1="555.50" x2="1318.5" y2="555.50" stroke="#7cc8ee" stroke-width="1"/><line x1="562.5" y1="571.50" x2="1318.5" y2="571.50" stroke="#7cc8ee" stroke-width="1"/><line x1="562.5" y1="587.50" x2="1318.5" y2="587.50" stroke="#7cc8ee" stroke-width="1"/><line x1="562.5" y1="603.50" x2="1318.5" y2="603.50" stroke="#7cc8ee" stroke-width="1"/><line x1="562.5" y1="619.50" x2="1318.5" y2="619.50" stroke="#7cc8ee" stroke-width="1"/><line x1="562.5" y1="636.50" x2="1318.5" y2="636.50" stroke="#7cc8ee" stroke-width="1"/><line x1="562.5" y1="652.50" x2="1318.5" y2="652.50" stroke="#7cc8ee" stroke-width="1"/><line x1="562.5" y1="668.50" x2="1318.5" y2="668.50" stroke="#7cc8ee" stroke-width="1"/><line x1="562.5" y1="684.50" x2="1318.5" y2="684.50" stroke="#7cc8ee" stroke-width="1"/><line x1="562.5" y1="700.50" x2="1318.5" y2="700.50" stroke="#7cc8ee" stroke-width="1"/><line x1="562.5" y1="716.50" x2="1318.5" y2="716.50" stroke="#7cc8ee" stroke-width="1"/><line x1="562.50" y1="555.5" x2="562.50" y2="716.5" stroke="#7cc8ee" stroke-width="1"/><line x1="625.50" y1="555.5" x2="625.50" y2="716.5" stroke="#7cc8ee" stroke-width="1"/><line x1="688.50" y1="555.5" x2="688.50" y2="716.5" stroke="#7cc8ee" stroke-width="1"/><line x1="751.50" y1="555.5" x2="751.50" y2="716.5" stroke="#7cc8ee" stroke-width="1"/><line x1="814.50" y1="555.5" x2="814.50" y2="716.5" stroke="#7cc8ee" stroke-width="1"/><line x1="877.50" y1="555.5" x2="877.50" y2="716.5" stroke="#7cc8ee" stroke-width="1"/><line x1="940.50" y1="555.5" x2="940.50" y2="716.5" stroke="#7cc8ee" stroke-width="1"/><line x1="1003.50" y1="555.5" x2="1003.50" y2="716.5" stroke="#7cc8ee" stroke-width="1"/><line x1="1066.50" y1="555.5" x2="1066.50" y2="716.5" stroke="#7cc8ee" stroke-width="1"/><line x1="1129.50" y1="555.5" x2="1129.50" y2="716.5" stroke="#7cc8ee" stroke-width="1"/><line x1="1192.50" y1="555.5" x2="1192.50" y2="716.5" stroke="#7cc8ee" stroke-width="1"/><line x1="1255.50" y1="555.5" x2="1255.50" y2="716.5" stroke="#7cc8ee" stroke-width="1"/><line x1="1318.50" y1="555.5" x2="1318.50" y2="716.5" stroke="#7cc8ee" stroke-width="1.6"/><polyline points="594.27,586.43 657.20,581.92 720.13,577.09 783.07,572.58 846.00,568.07 908.93,563.55 971.87,563.55 1034.80,563.55 1097.73,563.55 1160.67,563.55 1223.60,563.55 1286.53,563.55" fill="none" stroke="#f07a6b" stroke-width="1.7" stroke-linejoin="round"/><circle cx="594.27" cy="586.43" r="2.5" fill="#f07a6b"/><circle cx="657.20" cy="581.92" r="2.5" fill="#f07a6b"/><circle cx="720.13" cy="577.09" r="2.5" fill="#f07a6b"/><circle cx="783.07" cy="572.58" r="2.5" fill="#f07a6b"/><circle cx="846.00" cy="568.07" r="2.5" fill="#f07a6b"/><circle cx="908.93" cy="563.55" r="2.5" fill="#f07a6b"/><circle cx="971.87" cy="563.55" r="2.5" fill="#f07a6b"/><circle cx="1034.80" cy="563.55" r="2.5" fill="#f07a6b"/><circle cx="1097.73" cy="563.55" r="2.5" fill="#f07a6b"/><circle cx="1160.67" cy="563.55" r="2.5" fill="#f07a6b"/><circle cx="1223.60" cy="563.55" r="2.5" fill="#f07a6b"/><circle cx="1286.53" cy="563.55" r="2.5" fill="#f07a6b"/><polyline points="594.27,697.59 657.20,693.40 720.13,689.54 783.07,685.67 846.00,682.12 908.93,678.58 971.87,678.58 1034.80,678.58 1097.73,678.58 1160.67,678.58 1223.60,678.58 1286.53,678.58" fill="none" stroke="#5d9c3b" stroke-width="1.7" stroke-linejoin="round"/><circle cx="594.27" cy="697.59" r="2.5" fill="#5d9c3b"/><circle cx="657.20" cy="693.40" r="2.5" fill="#5d9c3b"/><circle cx="720.13" cy="689.54" r="2.5" fill="#5d9c3b"/><circle cx="783.07" cy="685.67" r="2.5" fill="#5d9c3b"/><circle cx="846.00" cy="682.12" r="2.5" fill="#5d9c3b"/><circle cx="908.93" cy="678.58" r="2.5" fill="#5d9c3b"/><circle cx="971.87" cy="678.58" r="2.5" fill="#5d9c3b"/><circle cx="1034.80" cy="678.58" r="2.5" fill="#5d9c3b"/><circle cx="1097.73" cy="678.58" r="2.5" fill="#5d9c3b"/><circle cx="1160.67" cy="678.58" r="2.5" fill="#5d9c3b"/><circle cx="1223.60" cy="678.58" r="2.5" fill="#5d9c3b"/><circle cx="1286.53" cy="678.58" r="2.5" fill="#5d9c3b"/><polyline points="594.27,700.17 657.20,697.27 720.13,695.01 783.07,692.11 846.00,688.57 908.93,685.02 971.87,685.02 1034.80,685.02 1097.73,685.02 1160.67,685.02 1223.60,685.02 1286.53,685.02" fill="none" stroke="#4a4ad6" stroke-width="1.7" stroke-linejoin="round"/><circle cx="594.27" cy="700.17" r="2.5" fill="#4a4ad6"/><circle cx="657.20" cy="697.27" r="2.5" fill="#4a4ad6"/><circle cx="720.13" cy="695.01" r="2.5" fill="#4a4ad6"/><circle cx="783.07" cy="692.11" r="2.5" fill="#4a4ad6"/><circle cx="846.00" cy="688.57" r="2.5" fill="#4a4ad6"/><circle cx="908.93" cy="685.02" r="2.5" fill="#4a4ad6"/><circle cx="971.87" cy="685.02" r="2.5" fill="#4a4ad6"/><circle cx="1034.80" cy="685.02" r="2.5" fill="#4a4ad6"/><circle cx="1097.73" cy="685.02" r="2.5" fill="#4a4ad6"/><circle cx="1160.67" cy="685.02" r="2.5" fill="#4a4ad6"/><circle cx="1223.60" cy="685.02" r="2.5" fill="#4a4ad6"/><circle cx="1286.53" cy="685.02" r="2.5" fill="#4a4ad6"/><line x1="823.1" y1="541.7" x2="844.7" y2="541.7" stroke="#f07a6b" stroke-width="1.8"/><circle cx="833.6" cy="541.7" r="1.9" fill="#f07a6b"/><line x1="900.4" y1="541.7" x2="922.0" y2="541.7" stroke="#5d9c3b" stroke-width="1.8"/><circle cx="910.9" cy="541.7" r="1.9" fill="#5d9c3b"/><line x1="978.7" y1="541.7" x2="1000.3000000000001" y2="541.7" stroke="#4a4ad6" stroke-width="1.8"/><circle cx="989.2" cy="541.7" r="1.9" fill="#4a4ad6"/></svg>
<div class="t" style="top:550.77px;font-size:9.6px;line-height:9.6px;color:#1a1a1a;font-weight:bold;letter-spacing:0.35px;left:1328.80px;">30</div>
<div class="t" style="top:566.88px;font-size:9.6px;line-height:9.6px;color:#1a1a1a;font-weight:bold;letter-spacing:0.35px;left:1328.80px;">25</div>
<div class="t" style="top:582.99px;font-size:9.6px;line-height:9.6px;color:#1a1a1a;font-weight:bold;letter-spacing:0.35px;left:1328.80px;">20</div>
<div class="t" style="top:599.10px;font-size:9.6px;line-height:9.6px;color:#1a1a1a;font-weight:bold;letter-spacing:0.35px;left:1328.80px;">15</div>
<div class="t" style="top:615.21px;font-size:9.6px;line-height:9.6px;color:#1a1a1a;font-weight:bold;letter-spacing:0.35px;left:1328.80px;">10</div>
<div class="t" style="top:631.32px;font-size:9.6px;line-height:9.6px;color:#1a1a1a;font-weight:bold;letter-spacing:0.35px;left:1328.80px;">5</div>
<div class="t" style="top:647.43px;font-size:9.6px;line-height:9.6px;color:#1a1a1a;font-weight:bold;letter-spacing:0.35px;left:1328.80px;">-</div>
<div class="t" style="top:663.54px;font-size:9.6px;line-height:9.6px;color:#1a1a1a;font-weight:bold;letter-spacing:0.35px;left:1326.00px;">(5)</div>
<div class="t" style="top:679.65px;font-size:9.6px;line-height:9.6px;color:#1a1a1a;font-weight:bold;letter-spacing:0.35px;left:1326.00px;">(10)</div>
<div class="t" style="top:695.76px;font-size:9.6px;line-height:9.6px;color:#1a1a1a;font-weight:bold;letter-spacing:0.35px;left:1326.00px;">(15)</div>
<div class="t" style="top:711.87px;font-size:9.6px;line-height:9.6px;color:#1a1a1a;font-weight:bold;letter-spacing:0.35px;left:1326.00px;">(20)</div>
<div class="t" style="top:724.55px;font-size:8.8px;line-height:8.8px;color:#1a1a1a;font-weight:bold;letter-spacing:0.2px;left:564.27px;width:60px;text-align:center;">Jan</div>
<div class="t" style="top:724.55px;font-size:8.8px;line-height:8.8px;color:#1a1a1a;font-weight:bold;letter-spacing:0.2px;left:627.20px;width:60px;text-align:center;">Feb</div>
<div class="t" style="top:724.55px;font-size:8.8px;line-height:8.8px;color:#1a1a1a;font-weight:bold;letter-spacing:0.2px;left:690.13px;width:60px;text-align:center;">Mar</div>
<div class="t" style="top:724.55px;font-size:8.8px;line-height:8.8px;color:#1a1a1a;font-weight:bold;letter-spacing:0.2px;left:753.07px;width:60px;text-align:center;">Apr</div>
<div class="t" style="top:724.55px;font-size:8.8px;line-height:8.8px;color:#1a1a1a;font-weight:bold;letter-spacing:0.2px;left:816.00px;width:60px;text-align:center;">May</div>
<div class="t" style="top:724.55px;font-size:8.8px;line-height:8.8px;color:#1a1a1a;font-weight:bold;letter-spacing:0.2px;left:878.93px;width:60px;text-align:center;">Jun</div>
<div class="t" style="top:724.55px;font-size:8.8px;line-height:8.8px;color:#1a1a1a;font-weight:bold;letter-spacing:0.2px;left:941.87px;width:60px;text-align:center;">Jul</div>
<div class="t" style="top:724.55px;font-size:8.8px;line-height:8.8px;color:#1a1a1a;font-weight:bold;letter-spacing:0.2px;left:1004.80px;width:60px;text-align:center;">Aug</div>
<div class="t" style="top:724.55px;font-size:8.8px;line-height:8.8px;color:#1a1a1a;font-weight:bold;letter-spacing:0.2px;left:1067.73px;width:60px;text-align:center;">Sep</div>
<div class="t" style="top:724.55px;font-size:8.8px;line-height:8.8px;color:#1a1a1a;font-weight:bold;letter-spacing:0.2px;left:1130.67px;width:60px;text-align:center;">Oct</div>
<div class="t" style="top:724.55px;font-size:8.8px;line-height:8.8px;color:#1a1a1a;font-weight:bold;letter-spacing:0.2px;left:1193.60px;width:60px;text-align:center;">Nov</div>
<div class="t" style="top:724.55px;font-size:8.8px;line-height:8.8px;color:#1a1a1a;font-weight:bold;letter-spacing:0.2px;left:1256.53px;width:60px;text-align:center;">Dec</div>
<div class="t" style="top:538.38px;font-size:9px;line-height:9px;color:#1a1a1a;font-weight:bold;letter-spacing:0.3px;left:847.00px;">Revenue</div>
<div class="t" style="top:538.38px;font-size:9px;line-height:9px;color:#1a1a1a;font-weight:bold;letter-spacing:0.3px;left:927.00px;">EBITDA</div>
<div class="t" style="top:538.38px;font-size:9px;line-height:9px;color:#1a1a1a;font-weight:bold;letter-spacing:0.3px;left:1004.60px;">Net Profit After Tax</div>
</div>
<svg style="left:0;top:0" width="1390" height="140"><rect x="18.5" y="16.5" width="10.5" height="12" rx="1.2" fill="#1f9a4e"/><rect x="18.5" y="16.5" width="10.5" height="4" rx="1" fill="#5fd87a"/><rect x="18.5" y="20.5" width="10.5" height="4" fill="#2cb35a"/><rect x="16.8" y="19.2" width="6.6" height="6.6" rx="0.8" fill="#14703a"/><path d="M18.3 20.7 L21.9 24.3 M21.9 20.7 L18.3 24.3" stroke="#fff" stroke-width="1.1"/></svg>
<div class="t" style="top:18.80px;font-size:8.5px;line-height:8.5px;color:#e6e6e6;left:45.30px;">beauty-e-store.xlsx</div>
<div class="t" style="top:18.55px;font-size:8.8px;line-height:8.8px;color:#e6e6e6;left:121.30px;">-</div>
<div class="t" style="top:18.80px;font-size:8.5px;line-height:8.5px;color:#e6e6e6;letter-spacing:-0.1px;left:130.00px;">Read-Only</div>
<svg style="left:0;top:0" width="1390" height="60"><path d="M174 20.5 L177 23.5 L180 20.5" fill="none" stroke="#ddd" stroke-width="1.1"/><circle cx="1191.8" cy="20.6" r="3.6" fill="none" stroke="#ddd" stroke-width="1.1"/><path d="M1189.2 23.3 L1186.2 26.3" stroke="#ddd" stroke-width="1.2"/><defs><clipPath id="av"><circle cx="1231.5" cy="22" r="8.6"/></clipPath></defs><g clip-path="url(#av)"><rect x="1222" y="13" width="19" height="19" fill="#a9bfd3"/><ellipse cx="1231.8" cy="21.5" rx="3.6" ry="4.8" fill="#b88c74"/><path d="M1223 32 Q1224 26.5 1231.5 26 Q1239 26.5 1240 32Z" fill="#7d6a62"/></g><path d="M1260.3 19.2 L1262.3 17 L1266.7 17 L1268.7 19.2 L1264.5 25.5 Z M1260.3 19.2 L1268.7 19.2 M1262.8 19.2 L1264.5 25.5 L1266.2 19.2" fill="none" stroke="#e0e0e0" stroke-width="1.1" stroke-linejoin="round"/><path d="M1294 22 L1302.5 22" stroke="#ddd" stroke-width="1"/><rect x="1330" y="19.5" width="6" height="6" rx="1" fill="none" stroke="#ddd" stroke-width="1"/><path d="M1331.8 19.5 L1331.8 18.3 Q1331.8 17.7 1332.5 17.7 L1337 17.7 Q1337.8 17.7 1337.8 18.5 L1337.8 23 Q1337.8 23.7 1337 23.7 L1336 23.7" fill="none" stroke="#ddd" stroke-width="1"/><path d="M1363.2 18.3 L1370.7 25.8 M1370.7 18.3 L1363.2 25.8" stroke="#e6e6e6" stroke-width="1.1"/></svg>
<div class="t" style="top:47.13px;font-size:9.3px;line-height:9.3px;color:#e6e6e6;left:20.00px;">File</div>
<div class="t" style="top:47.13px;font-size:9.3px;line-height:9.3px;color:#e6e6e6;left:94.70px;">Insert</div>
<div class="t" style="top:47.13px;font-size:9.3px;line-height:9.3px;color:#e6e6e6;left:132.70px;">Draw</div>
<div class="t" style="top:47.13px;font-size:9.3px;line-height:9.3px;color:#e6e6e6;left:169.30px;">Page Layout</div>
<div class="t" style="top:47.13px;font-size:9.3px;line-height:9.3px;color:#e6e6e6;left:235.30px;">Formulas</div>
<div class="t" style="top:47.13px;font-size:9.3px;line-height:9.3px;color:#e6e6e6;left:287.70px;">Data</div>
<div class="t" style="top:47.13px;font-size:9.3px;line-height:9.3px;color:#e6e6e6;left:321.40px;">Review</div>
<div class="t" style="top:47.13px;font-size:9.3px;line-height:9.3px;color:#e6e6e6;left:364.60px;">View</div>
<div class="t" style="top:47.13px;font-size:9.3px;line-height:9.3px;color:#e6e6e6;left:399.60px;">Automate</div>
<div class="t" style="top:47.13px;font-size:9.3px;line-height:9.3px;color:#e6e6e6;left:455.50px;">Help</div>
<div class="t" style="top:46.96px;font-size:9.5px;line-height:9.5px;color:#f2f2f2;font-weight:bold;left:53.40px;">Home</div>
<div class="r" style="left:53.40px;top:57.60px;width:27.60px;height:1.80px;background:#4cc46b;border-radius:1px;"></div>
<div class="r" style="left:1255.30px;top:41.40px;width:64.30px;height:17.60px;background:#262626;border:1px solid #4a4a4a;border-radius:4px;box-sizing:border-box;"></div>
<svg style="left:0;top:0" width="1390" height="60"><path d="M1259.5 46.2 L1267 46.2 L1267 51.8 L1262.5 51.8 L1260.3 53.8 L1260.3 51.8 L1259.5 51.8 Z" fill="none" stroke="#ddd" stroke-width="1"/></svg>
<div class="t" style="top:46.17px;font-size:8.9px;line-height:8.9px;color:#e6e6e6;left:1269.60px;">Comments</div>
<div class="r" style="left:1326.00px;top:41.40px;width:49.80px;height:17.60px;background:#3aa85c;border-radius:4px;"></div>
<svg style="left:0;top:0" width="1390" height="60"><path d="M1329.5 49 L1329.5 54.3 L1336.5 54.3 L1336.5 52 M1331.5 52 Q1332 48.3 1335 48.3 L1335 46.5 L1337.5 49 L1335 51.5 L1335 49.8 Q1333 49.8 1331.5 52Z" fill="none" stroke="#0f2d17" stroke-width="0.9"/><path d="M1369.4 49.5 L1371.4 51.5 L1373.4 49.5" fill="none" stroke="#0f2d17" stroke-width="1"/></svg>
<div class="t" style="top:46.30px;font-size:9.1px;line-height:9.1px;color:#0f2414;left:1340.80px;">Share</div>
<div class="r" style="left:135.40px;top:64.50px;width:1.00px;height:65.00px;background:#444;"></div>
<div class="r" style="left:303.30px;top:64.50px;width:1.00px;height:65.00px;background:#444;"></div>
<div class="r" style="left:518.70px;top:64.50px;width:1.00px;height:65.00px;background:#444;"></div>
<div class="r" style="left:635.30px;top:64.50px;width:1.00px;height:65.00px;background:#444;"></div>
<div class="r" style="left:739.60px;top:64.50px;width:1.00px;height:65.00px;background:#444;"></div>
<div class="r" style="left:895.20px;top:64.50px;width:1.00px;height:65.00px;background:#444;"></div>
<div class="r" style="left:940.60px;top:64.50px;width:1.00px;height:65.00px;background:#444;"></div>
<div class="r" style="left:984.60px;top:64.50px;width:1.00px;height:65.00px;background:#444;"></div>
<div class="t" style="top:93.42px;font-size:8.6px;line-height:8.6px;color:#6e6e6e;left:25.00px;">Paste</div>
<div class="t" style="top:69.12px;font-size:8.6px;line-height:8.6px;color:#e6e6e6;left:68.00px;">Cut</div>
<div class="t" style="top:87.32px;font-size:8.6px;line-height:8.6px;color:#e6e6e6;left:68.00px;">Copy</div>
<div class="t" style="top:106.69px;font-size:8.4px;line-height:8.4px;color:#e6e6e6;left:68.00px;">Format Painter</div>
<div class="t" style="top:122.61px;font-size:7.9px;line-height:7.9px;color:#cfcfcf;left:52.00px;">Clipboard</div>
<div class="r" style="left:141.40px;top:70.10px;width:86.40px;height:17.40px;background:transparent;border:1px solid #5a5a5a;border-radius:3px;box-sizing:border-box;"></div>
<div class="t" style="top:74.55px;font-size:8.8px;line-height:8.8px;color:#e6e6e6;left:143.80px;">Tahoma</div>
<div class="r" style="left:229.00px;top:70.10px;width:31.60px;height:17.40px;background:transparent;border:1px solid #5a5a5a;border-radius:3px;box-sizing:border-box;"></div>
<div class="t" style="top:74.55px;font-size:8.8px;line-height:8.8px;color:#e6e6e6;left:231.00px;">8</div>
<div class="t" style="top:72.84px;font-size:12px;line-height:12px;color:#e6e6e6;left:265.40px;">A</div>
<div class="t" style="top:74.20px;font-size:10.4px;line-height:10.4px;color:#e6e6e6;left:284.50px;">A</div>
<div class="t" style="top:96.90px;font-size:9.8px;line-height:9.8px;color:#e6e6e6;font-weight:bold;left:146.50px;">B</div>
<div class="t" style="top:96.90px;font-size:9.8px;line-height:9.8px;color:#e6e6e6;left:166.00px;"><i>I</i></div>
<div class="t" style="top:96.34px;font-size:9.4px;line-height:9.4px;color:#e6e6e6;left:183.80px;">U</div>
<div class="r" style="left:183.80px;top:105.80px;width:6.60px;height:0.90px;background:#d8d8d8;"></div>
<div class="r" style="left:208.50px;top:93.00px;width:1.00px;height:17.00px;background:#444;"></div>
<div class="r" style="left:239.80px;top:93.00px;width:1.00px;height:17.00px;background:#444;"></div>
<div class="r" style="left:244.00px;top:104.40px;width:11.60px;height:3.30px;background:#f5e800;"></div>
<div class="t" style="top:94.83px;font-size:10px;line-height:10px;color:#e6e6e6;left:273.50px;">A</div>
<div class="r" style="left:273.00px;top:104.40px;width:11.50px;height:3.30px;background:#e81010;"></div>
<div class="t" style="top:122.76px;font-size:8.2px;line-height:8.2px;color:#cfcfcf;left:206.00px;">Font</div>
<div class="r" style="left:365.40px;top:70.00px;width:1.00px;height:17.00px;background:#444;"></div>
<div class="r" style="left:365.40px;top:93.00px;width:1.00px;height:17.00px;background:#444;"></div>
<div class="r" style="left:407.30px;top:70.00px;width:1.00px;height:40.00px;background:#444;"></div>
<div class="t" style="top:74.80px;font-size:8.5px;line-height:8.5px;color:#e6e6e6;left:429.40px;">Wrap Text</div>
<div class="t" style="top:98.10px;font-size:8.5px;line-height:8.5px;color:#e6e6e6;left:429.40px;">Merge &amp; Center</div>
<div class="t" style="top:122.76px;font-size:8.2px;line-height:8.2px;color:#cfcfcf;left:388.00px;">Alignment</div>
<div class="r" style="left:525.00px;top:70.00px;width:104.60px;height:16.80px;background:transparent;border:1px solid #5a5a5a;border-radius:3px;box-sizing:border-box;"></div>
<div class="t" style="top:74.80px;font-size:8.5px;line-height:8.5px;color:#e6e6e6;left:527.00px;">General</div>
<div class="t" style="top:96.69px;font-size:11px;line-height:11px;color:#e6e6e6;left:529.50px;">$</div>
<div class="t" style="top:96.27px;font-size:11.5px;line-height:11.5px;color:#e6e6e6;left:557.00px;">%</div>
<div class="r" style="left:591.70px;top:94.00px;width:1.00px;height:16.00px;background:#444;"></div>
<div class="t" style="top:97.00px;font-size:6.5px;line-height:6.5px;color:#e6e6e6;left:601.00px;">0</div>
<div class="t" style="top:102.50px;font-size:6.5px;line-height:6.5px;color:#e6e6e6;left:601.00px;">.00</div>
<div class="t" style="top:97.00px;font-size:6.5px;line-height:6.5px;color:#e6e6e6;left:615.50px;">.00</div>
<div class="t" style="top:102.50px;font-size:6.5px;line-height:6.5px;color:#e6e6e6;left:619.00px;">0</div>
<div class="t" style="top:122.76px;font-size:8.2px;line-height:8.2px;color:#cfcfcf;left:557.00px;">Number</div>
<div class="t" style="top:93.22px;font-size:8.6px;line-height:8.6px;color:#e6e6e6;left:645.00px;">Insert</div>
<div class="t" style="top:93.22px;font-size:8.6px;line-height:8.6px;color:#e6e6e6;left:675.50px;">Delete</div>
<div class="t" style="top:93.22px;font-size:8.6px;line-height:8.6px;color:#e6e6e6;left:705.00px;">Format</div>
<div class="t" style="top:122.76px;font-size:8.2px;line-height:8.2px;color:#cfcfcf;left:678.80px;">Cells</div>
<div class="t" style="top:68.19px;font-size:11px;line-height:11px;color:#e6e6e6;left:749.50px;">&#931;</div>
<div class="t" style="top:69.22px;font-size:8.6px;line-height:8.6px;color:#e6e6e6;left:763.00px;">AutoSum</div>
<div class="t" style="top:88.02px;font-size:8.6px;line-height:8.6px;color:#e6e6e6;left:763.00px;">Fill</div>
<div class="t" style="top:106.22px;font-size:8.6px;line-height:8.6px;color:#e6e6e6;left:763.00px;">Clear</div>
<div class="t" style="top:69.72px;font-size:8.6px;line-height:8.6px;color:#5aa8e8;left:828.00px;">A</div>
<div class="t" style="top:78.72px;font-size:8.6px;line-height:8.6px;color:#e6e6e6;left:828.50px;">Z</div>
<div class="t" style="top:92.42px;font-size:8.6px;line-height:8.6px;color:#e6e6e6;left:826.00px;">Sort &amp;</div>
<div class="t" style="top:104.02px;font-size:8.6px;line-height:8.6px;color:#e6e6e6;left:825.50px;">Filter</div>
<div class="t" style="top:92.42px;font-size:8.6px;line-height:8.6px;color:#e6e6e6;left:859.50px;">Find &amp;</div>
<div class="t" style="top:104.02px;font-size:8.6px;line-height:8.6px;color:#e6e6e6;left:857.50px;">Select</div>
<div class="t" style="top:122.76px;font-size:8.2px;line-height:8.2px;color:#cfcfcf;left:805.80px;">Editing</div>
<div class="t" style="top:92.42px;font-size:8.6px;line-height:8.6px;color:#e6e6e6;left:902.80px;">Add-ins</div>
<div class="t" style="top:122.76px;font-size:8.2px;line-height:8.2px;color:#cfcfcf;left:904.00px;">Add-ins</div>
<div class="t" style="top:92.42px;font-size:8.6px;line-height:8.6px;color:#e6e6e6;left:948.00px;">Analyze</div>
<div class="t" style="top:104.02px;font-size:8.6px;line-height:8.6px;color:#e6e6e6;left:953.00px;">Data</div>
<svg style="left:0;top:0" width="1390" height="140"><rect x="26.8" y="69.8" width="14.6" height="18" rx="1" fill="none" stroke="#8a8a8a" stroke-width="1.1"/><path d="M30 70 L30 68 Q33.5 65.5 37 68 L37 70" fill="none" stroke="#8a8a8a" stroke-width="1.1"/><rect x="36.5" y="76" width="9.5" height="13" fill="#292929" stroke="#8a8a8a" stroke-width="1.1"/><path d="M31.8 107.10000000000001 L34 109.3 L36.2 107.10000000000001" fill="none" stroke="#666" stroke-width="1"/><path d="M57 67.5 L61.8 76 M62 67.5 L57.2 76" stroke="#d8d8d8" stroke-width="1"/><circle cx="56.8" cy="77.6" r="1.5" fill="#3a8ee6"/><circle cx="62" cy="77.6" r="1.5" fill="#3a8ee6"/><rect x="54" y="86.2" width="6" height="9" fill="none" stroke="#d0d0d0" stroke-width="1"/><path d="M58.5 89 L62.5 89 L64.8 91.3 L64.8 97 L58.5 97 Z" fill="#292929" stroke="#d0d0d0" stroke-width="1"/><path d="M100.8 90.9 L103 93.1 L105.2 90.9" fill="none" stroke="#d0d0d0" stroke-width="1"/><path d="M55 110.5 L60.5 105.5 L64 109 L59 114.8 Z" fill="#f2b230"/><path d="M55 110.5 L60.5 105.5 L64 109 L59 114.8 Z" fill="none" stroke="#e8e8e8" stroke-width="0.9"/><path d="M61.8 107 L64.8 104.2" stroke="#e8e8e8" stroke-width="1.4"/><path d="M127 128.7 L127 123.2 L132.5 123.2" fill="none" stroke="#cfcfcf" stroke-width="0.9"/><path d="M129 125.2 L132.5 128.7 M132.5 126.2 L132.5 128.7 L130 128.7" fill="none" stroke="#cfcfcf" stroke-width="0.9"/><path d="M221.3 77.9 L223.5 80.1 L225.7 77.9" fill="none" stroke="#d8d8d8" stroke-width="1"/><path d="M254.10000000000002 77.9 L256.3 80.1 L258.5 77.9" fill="none" stroke="#d8d8d8" stroke-width="1"/><path d="M273.5 76 L275 74.3 L276.5 76" fill="none" stroke="#5aa8e8" stroke-width="0.9"/><path d="M292.5 74.5 L294 76.2 L295.5 74.5" fill="none" stroke="#5aa8e8" stroke-width="0.9"/><path d="M198.5 100.10000000000001 L200.7 102.3 L202.89999999999998 100.10000000000001" fill="none" stroke="#d8d8d8" stroke-width="1"/><rect x="212.5" y="96" width="11" height="11" fill="none" stroke="#c8c8c8" stroke-width="1"/><path d="M218 96 L218 107 M212.5 101.5 L223.5 101.5" stroke="#c8c8c8" stroke-width="0.8"/><path d="M229.8 100.10000000000001 L232 102.3 L234.2 100.10000000000001" fill="none" stroke="#d8d8d8" stroke-width="1"/><path d="M246.5 99.5 L250 96 L254 100 L250.5 103.5 Z" fill="none" stroke="#e0e0e0" stroke-width="1"/><path d="M254.5 99 Q256 101 255 102.5" fill="none" stroke="#5aa8e8" stroke-width="1"/><path d="M260.8 100.10000000000001 L263 102.3 L265.2 100.10000000000001" fill="none" stroke="#d8d8d8" stroke-width="1"/><path d="M290.3 100.10000000000001 L292.5 102.3 L294.7 100.10000000000001" fill="none" stroke="#d8d8d8" stroke-width="1"/><path d="M295 128.7 L295 123.2 L300.5 123.2" fill="none" stroke="#cfcfcf" stroke-width="0.9"/><path d="M297 125.2 L300.5 128.7 M300.5 126.2 L300.5 128.7 L298 128.7" fill="none" stroke="#cfcfcf" stroke-width="0.9"/><path d="M313 72.5 L323 72.5" stroke="#d0d0d0" stroke-width="1"/><path d="M313 75.5 L323 75.5" stroke="#d0d0d0" stroke-width="1"/><path d="M313 78.5 L323 78.5" stroke="#d0d0d0" stroke-width="1"/><rect x="328.5" y="70.5" width="17" height="15" rx="2.5" fill="#333" stroke="#6a6a6a" stroke-width="1"/><path d="M332 74.5 L342 74.5" stroke="#d0d0d0" stroke-width="1"/><path d="M332 77.5 L342 77.5" stroke="#d0d0d0" stroke-width="1"/><path d="M332 80.5 L342 80.5" stroke="#d0d0d0" stroke-width="1"/><path d="M350 77.5 L360 77.5" stroke="#d0d0d0" stroke-width="1"/><path d="M350 80.5 L360 80.5" stroke="#d0d0d0" stroke-width="1"/><path d="M350 83.5 L360 83.5" stroke="#d0d0d0" stroke-width="1"/><path d="M371 84 L381 74" stroke="#5aa8e8" stroke-width="1.2"/><path d="M378 74 L381.5 73.5 L381 77" fill="none" stroke="#5aa8e8" stroke-width="1"/><path d="M371.5 76 L375 72.5 M373.5 78 L377 74.5" stroke="#d8d8d8" stroke-width="0.9"/><path d="M385.8 78.4 L388 80.6 L390.2 78.4" fill="none" stroke="#d8d8d8" stroke-width="1"/><path d="M313 96.5 L323 96.5" stroke="#d0d0d0" stroke-width="1"/><path d="M313 99.5 L320 99.5" stroke="#d0d0d0" stroke-width="1"/><path d="M313 102.5 L323 102.5" stroke="#d0d0d0" stroke-width="1"/><path d="M313 105.5 L320 105.5" stroke="#d0d0d0" stroke-width="1"/><path d="M331.5 96.5 L341.5 96.5" stroke="#d0d0d0" stroke-width="1"/><path d="M331.5 102.5 L341.5 102.5" stroke="#d0d0d0" stroke-width="1"/><path d="M333 99.5 L340 99.5" stroke="#d0d0d0" stroke-width="1"/><path d="M333 105.5 L340 105.5" stroke="#d0d0d0" stroke-width="1"/><path d="M350 96.5 L360 96.5" stroke="#d0d0d0" stroke-width="1"/><path d="M350 102.5 L360 102.5" stroke="#d0d0d0" stroke-width="1"/><path d="M353 99.5 L360 99.5" stroke="#d0d0d0" stroke-width="1"/><path d="M353 105.5 L360 105.5" stroke="#d0d0d0" stroke-width="1"/><path d="M370.5 96.5 L381.5 96.5" stroke="#d0d0d0" stroke-width="1"/><path d="M370.5 99.5 L377.5 99.5" stroke="#d0d0d0" stroke-width="1"/><path d="M370.5 102.5 L377.5 102.5" stroke="#d0d0d0" stroke-width="1"/><path d="M370.5 105.5 L381.5 105.5" stroke="#d0d0d0" stroke-width="1"/><path d="M373 101.5 L370.8 102.3 L373 103.3" fill="none" stroke="#5aa8e8" stroke-width="1.1"/><path d="M389 96.5 L400 96.5" stroke="#d0d0d0" stroke-width="1"/><path d="M389 99.5 L396 99.5" stroke="#d0d0d0" stroke-width="1"/><path d="M389 102.5 L396 102.5" stroke="#d0d0d0" stroke-width="1"/><path d="M389 105.5 L400 105.5" stroke="#d0d0d0" stroke-width="1"/><path d="M389 101.5 L391.3 102.3 L389 103.3" fill="none" stroke="#5aa8e8" stroke-width="1.1"/><path d="M417 74 L420 74 M417 77 L421 77 M417 80 L419 80" stroke="#d8d8d8" stroke-width="1"/><path d="M422 73.5 Q427 74 426.5 78 Q426 82 421 81.5" fill="none" stroke="#5aa8e8" stroke-width="1.1"/><rect x="415.5" y="96" width="11" height="11" fill="none" stroke="#d0d0d0" stroke-width="1"/><rect x="417" y="99.5" width="8" height="4" fill="#3a8ee6"/><path d="M415.5 99 L426.5 99 M415.5 104 L426.5 104" stroke="#d0d0d0" stroke-width="0.8"/><path d="M502.8 100.4 L505 102.6 L507.2 100.4" fill="none" stroke="#d8d8d8" stroke-width="1"/><path d="M510 128.7 L510 123.2 L515.5 123.2" fill="none" stroke="#cfcfcf" stroke-width="0.9"/><path d="M512 125.2 L515.5 128.7 M515.5 126.2 L515.5 128.7 L513 128.7" fill="none" stroke="#cfcfcf" stroke-width="0.9"/><path d="M622.8 77.7 L625 79.89999999999999 L627.2 77.7" fill="none" stroke="#d8d8d8" stroke-width="1"/><path d="M544.8 100.10000000000001 L547 102.3 L549.2 100.10000000000001" fill="none" stroke="#d8d8d8" stroke-width="1"/><circle cx="581.3" cy="99.3" r="2.1" fill="#e6e6e6"/><path d="M583.2 99.5 Q583.3 104 579.3 106" fill="none" stroke="#e6e6e6" stroke-width="1.3"/><path d="M597 99.5 L601 99.5 M597.5 98 L596.5 99.5 L597.5 101" fill="none" stroke="#5aa8e8" stroke-width="1"/><path d="M614.5 105.5 L618.5 105.5 M617.5 104 L618.5 105.5 L617.5 107" fill="none" stroke="#5aa8e8" stroke-width="1"/><path d="M625.8 128.7 L625.8 123.2 L631.3 123.2" fill="none" stroke="#cfcfcf" stroke-width="0.9"/><path d="M627.8 125.2 L631.3 128.7 M631.3 126.2 L631.3 128.7 L628.8 128.7" fill="none" stroke="#cfcfcf" stroke-width="0.9"/><rect x="644.5" y="68.6" width="22" height="17" fill="none" stroke="#c8c8c8" stroke-width="1"/><path d="M651.8 68.6 L651.8 85.6" stroke="#c8c8c8" stroke-width="0.8"/><path d="M644.5 74.3 L666.5 74.3" stroke="#c8c8c8" stroke-width="0.8"/><path d="M659.2 68.6 L659.2 85.6" stroke="#c8c8c8" stroke-width="0.8"/><path d="M644.5 79.9 L666.5 79.9" stroke="#c8c8c8" stroke-width="0.8"/><rect x="646" y="74.5" width="19.5" height="5.5" fill="#3a8ee6"/><path d="M651 77.3 L645 77.3 M647.5 75 L645 77.3 L647.5 79.6" fill="none" stroke="#9fd0ff" stroke-width="1"/><path d="M653.3 107.2 L655.5 109.39999999999999 L657.7 107.2" fill="none" stroke="#d8d8d8" stroke-width="1"/><rect x="676" y="68.6" width="22" height="17" fill="none" stroke="#c8c8c8" stroke-width="1"/><path d="M683.3 68.6 L683.3 85.6" stroke="#c8c8c8" stroke-width="0.8"/><path d="M676 74.3 L698 74.3" stroke="#c8c8c8" stroke-width="0.8"/><path d="M690.7 68.6 L690.7 85.6" stroke="#c8c8c8" stroke-width="0.8"/><path d="M676 79.9 L698 79.9" stroke="#c8c8c8" stroke-width="0.8"/><rect x="677.5" y="74.5" width="14" height="5.5" fill="#3a8ee6"/><path d="M691 73 L698.5 81.5 M698.5 73 L691 81.5" stroke="#e8473a" stroke-width="1.3"/><path d="M684.8 107.2 L687 109.39999999999999 L689.2 107.2" fill="none" stroke="#d8d8d8" stroke-width="1"/><rect x="707.6" y="68.5" width="21.5" height="17" fill="none" stroke="#c8c8c8" stroke-width="1"/><path d="M714.8 68.5 L714.8 85.5" stroke="#c8c8c8" stroke-width="0.8"/><path d="M707.6 74.2 L729.1 74.2" stroke="#c8c8c8" stroke-width="0.8"/><path d="M721.9 68.5 L721.9 85.5" stroke="#c8c8c8" stroke-width="0.8"/><path d="M707.6 79.8 L729.1 79.8" stroke="#c8c8c8" stroke-width="0.8"/><rect x="709" y="74.3" width="19" height="5.6" fill="#3a8ee6"/><path d="M710 66.5 L727 66.5" stroke="#3a8ee6" stroke-width="1.2"/><path d="M716.3 107.2 L718.5 109.39999999999999 L720.7 107.2" fill="none" stroke="#d8d8d8" stroke-width="1"/><path d="M811.8 71.9 L814 74.1 L816.2 71.9" fill="none" stroke="#d8d8d8" stroke-width="1"/><rect x="749" y="86.5" width="10.5" height="10" fill="none" stroke="#c8c8c8" stroke-width="1"/><path d="M754.2 88.5 L754.2 94 M752 92 L754.2 94.3 L756.4 92" fill="none" stroke="#5aa8e8" stroke-width="1.1"/><path d="M775.8 90.9 L778 93.1 L780.2 90.9" fill="none" stroke="#d8d8d8" stroke-width="1"/><path d="M749.5 111 L755.5 105 L759.5 109 L753.5 115 Z" fill="none" stroke="#d35ad8" stroke-width="1.3"/><path d="M752 108.5 L756 112.5" stroke="#d35ad8" stroke-width="2"/><path d="M784.8 109.2 L787 111.39999999999999 L789.2 109.2" fill="none" stroke="#d8d8d8" stroke-width="1"/><path d="M836.5 72 L848.5 72 L844 78 L844 84 L841 82 L841 78 Z" fill="none" stroke="#d0d0d0" stroke-width="1"/><path d="M846.8 107.2 L849 109.39999999999999 L851.2 107.2" fill="none" stroke="#d8d8d8" stroke-width="1"/><circle cx="876" cy="72.8" r="5.8" fill="none" stroke="#d0d0d0" stroke-width="1.1"/><path d="M872 77 L862.5 87" stroke="#d0d0d0" stroke-width="1.1"/><path d="M881.8 107.2 L884 109.39999999999999 L886.2 107.2" fill="none" stroke="#d8d8d8" stroke-width="1"/><rect x="907.5" y="67.2" width="20.5" height="20.5" fill="none" stroke="#d05a30" stroke-width="1.2"/><rect x="909.8" y="69.5" width="7" height="7" fill="none" stroke="#d05a30" stroke-width="1.1"/><rect x="918.7" y="69.5" width="7" height="7" fill="none" stroke="#d05a30" stroke-width="1.1"/><rect x="909.8" y="78.4" width="7" height="7" fill="none" stroke="#d05a30" stroke-width="1.1"/><rect x="918.7" y="78.4" width="7" height="7" fill="none" stroke="#d05a30" stroke-width="1.1"/><rect x="952.5" y="67.2" width="20.5" height="20.5" fill="none" stroke="#c8c8c8" stroke-width="1"/><path d="M952.5 72 L973 72 M957.5 67.2 L957.5 87.7" stroke="#888" stroke-width="0.8"/><circle cx="963.5" cy="77.5" r="4.6" fill="#292929" stroke="#d8d8d8" stroke-width="1.1"/><rect x="962" y="75" width="3" height="4.5" fill="#5aa8e8"/><path d="M966.8 81 L971.5 86" stroke="#d8d8d8" stroke-width="1.2"/><path d="M1365.8 121.3 L1368.8 124.3 L1371.8 121.3" fill="none" stroke="#d8d8d8" stroke-width="1"/></svg>
<svg style="left:0;top:0" width="1390" height="140"><circle cx="1059.8" cy="94.8" r="27" fill="#ffffff"/><rect x="1044.8" y="82.9" width="29.7" height="25.4" fill="#5b5ee8"/><rect x="1048.3" y="86.2" width="9.8" height="7.6" fill="#fff"/><rect x="1061.2" y="86.2" width="9.8" height="7.6" fill="#fff"/><rect x="1048.3" y="97.3" width="9.8" height="7.6" fill="#fff"/><rect x="1061.2" y="97.3" width="9.8" height="7.6" fill="#fff"/></svg>
<div class="t" style="top:73.78px;font-size:24.6px;line-height:24.6px;color:#ffffff;font-weight:bold;left:1098.60px;transform:scaleX(0.879);transform-origin:0 0;-webkit-text-stroke:0.8px #fff;">FINMODELSLAB</div>
<svg style="left:0;top:0" width="1390" height="140"><rect x="1156.5" y="78.5" width="6.6" height="4.5" fill="#292929"/><rect x="1158.5" y="73.8" width="2.6" height="10" fill="#fff"/></svg>
<div class="t" style="top:98.96px;font-size:18px;line-height:18px;color:#ffffff;letter-spacing:10.95px;left:1099.40px;">Templates</div>
<div class="r" style="left:1370.00px;top:133.00px;width:14.70px;height:667.00px;background:#141414;"></div>
<svg style="left:0;top:0" width="1390" height="844"><path d="M1374.5 141.8 L1377.7 137.5 L1380.9 141.8 Z" fill="#9a9a9a"/><rect x="1375" y="145.6" width="5.5" height="253.5" rx="2.75" fill="#8c8c8c"/><path d="M1374.5 792.3 L1377.7 796.6 L1380.9 792.3 Z" fill="#9a9a9a"/></svg>
<div class="r" style="left:5.00px;top:800.00px;width:1379.70px;height:22.50px;background:#0d0d0d;"></div>
<div class="r" style="left:5.00px;top:822.50px;width:1379.70px;height:15.90px;background:#131313;"></div>
<svg style="left:0;top:0" width="1390" height="844"><path d="M26 808 L23 811 L26 814" fill="none" stroke="#9a9a9a" stroke-width="1"/><path d="M45.5 808 L48.5 811 L45.5 814" fill="none" stroke="#9a9a9a" stroke-width="1"/></svg>
<div class="t" style="top:806.83px;font-size:10px;line-height:10px;color:#e0e0e0;left:90.60px;">Contents</div>
<div class="r" style="left:143.00px;top:803.00px;width:61.50px;height:17.20px;background:#fff266;border-radius:4px;"></div>
<div class="t" style="top:807.17px;font-size:9.6px;line-height:9.6px;color:#1a1a1a;left:133.00px;width:81.5px;text-align:center;">Dashboard</div>
<div class="r" style="left:210.60px;top:803.00px;width:50.70px;height:17.20px;background:#fff266;border-radius:4px;"></div>
<div class="t" style="top:807.17px;font-size:9.6px;line-height:9.6px;color:#1a1a1a;left:200.60px;width:70.70000000000002px;text-align:center;">Revenue</div>
<div class="r" style="left:267.70px;top:803.00px;width:75.50px;height:17.20px;background:#fff266;border-radius:4px;"></div>
<div class="t" style="top:807.17px;font-size:9.6px;line-height:9.6px;color:#1a1a1a;left:257.70px;width:95.5px;text-align:center;">COGS &amp; OPEX</div>
<div class="r" style="left:349.40px;top:803.00px;width:43.90px;height:17.20px;background:#fff266;border-radius:4px;"></div>
<div class="t" style="top:807.17px;font-size:9.6px;line-height:9.6px;color:#1a1a1a;left:339.40px;width:63.900000000000034px;text-align:center;">Payroll</div>
<div class="r" style="left:398.90px;top:803.00px;width:41.10px;height:17.20px;background:#fff266;border-radius:4px;"></div>
<div class="t" style="top:807.17px;font-size:9.6px;line-height:9.6px;color:#1a1a1a;left:388.90px;width:61.10000000000002px;text-align:center;">CAPEX</div>
<div class="r" style="left:446.40px;top:803.00px;width:54.00px;height:17.20px;background:#fff266;border-radius:4px;"></div>
<div class="t" style="top:807.17px;font-size:9.6px;line-height:9.6px;color:#1a1a1a;left:436.40px;width:74.0px;text-align:center;">CapTable</div>
<div class="r" style="left:506.80px;top:803.00px;width:43.20px;height:17.20px;background:#fff266;border-radius:4px;"></div>
<div class="t" style="top:807.17px;font-size:9.6px;line-height:9.6px;color:#1a1a1a;left:496.80px;width:63.19999999999999px;text-align:center;">Capital</div>
<div class="r" style="left:556.40px;top:803.00px;width:19.60px;height:17.20px;background:#4aaee4;border-radius:4px;"></div>
<div class="t" style="top:807.17px;font-size:9.6px;line-height:9.6px;color:#1a1a1a;left:546.40px;width:39.60000000000002px;text-align:center;">IS</div>
<div class="r" style="left:582.00px;top:803.00px;width:23.50px;height:17.20px;background:#4aaee4;border-radius:4px;"></div>
<div class="t" style="top:807.17px;font-size:9.6px;line-height:9.6px;color:#1a1a1a;left:572.00px;width:43.5px;text-align:center;">CF</div>
<div class="r" style="left:611.60px;top:803.00px;width:22.90px;height:17.20px;background:#4aaee4;border-radius:4px;"></div>
<div class="t" style="top:807.17px;font-size:9.6px;line-height:9.6px;color:#1a1a1a;left:601.60px;width:42.89999999999998px;text-align:center;">BS</div>
<div class="r" style="left:641.00px;top:803.00px;width:54.80px;height:17.20px;background:#4aaee4;border-radius:4px;"></div>
<div class="t" style="top:807.17px;font-size:9.6px;line-height:9.6px;color:#1a1a1a;left:631.00px;width:74.79999999999995px;text-align:center;">Scenarios</div>
<div class="r" style="left:701.80px;top:803.00px;width:55.60px;height:17.20px;background:#4aaee4;border-radius:4px;"></div>
<div class="t" style="top:807.17px;font-size:9.6px;line-height:9.6px;color:#1a1a1a;left:691.80px;width:75.60000000000002px;text-align:center;">Valuation</div>
<div class="r" style="left:824.00px;top:803.00px;width:23.00px;height:17.20px;background:#4aaee4;border-radius:4px;"></div>
<div class="t" style="top:807.17px;font-size:9.6px;line-height:9.6px;color:#1a1a1a;left:814.00px;width:43px;text-align:center;">BE</div>
<div class="r" style="left:853.40px;top:803.00px;width:34.20px;height:17.20px;background:#4aaee4;border-radius:4px;"></div>
<div class="t" style="top:807.17px;font-size:9.6px;line-height:9.6px;color:#1a1a1a;left:843.40px;width:54.200000000000045px;text-align:center;">ROIC</div>
<div class="r" style="left:894.50px;top:803.00px;width:40.30px;height:17.20px;background:#4aaee4;border-radius:4px;"></div>
<div class="t" style="top:807.17px;font-size:9.6px;line-height:9.6px;color:#1a1a1a;left:884.50px;width:60.299999999999955px;text-align:center;">Charts</div>
<div class="r" style="left:941.60px;top:803.00px;width:30.20px;height:17.20px;background:#4aaee4;border-radius:4px;"></div>
<div class="t" style="top:807.17px;font-size:9.6px;line-height:9.6px;color:#1a1a1a;left:931.60px;width:50.19999999999993px;text-align:center;">KPIs</div>
<div class="r" style="left:978.30px;top:803.00px;width:14.70px;height:17.20px;background:#4aaee4;border-radius:4px 0 0 4px;"></div>
<div class="t" style="top:807.17px;font-size:9.6px;line-height:9.6px;color:#1a1a1a;left:981.80px;">Sc</div>
<div class="r" style="left:140.00px;top:806.00px;width:1.00px;height:11.00px;background:#3a3a3a;"></div>
<div class="r" style="left:207.60px;top:806.00px;width:1.00px;height:11.00px;background:#3a3a3a;"></div>
<div class="r" style="left:264.70px;top:806.00px;width:1.00px;height:11.00px;background:#3a3a3a;"></div>
<div class="r" style="left:346.40px;top:806.00px;width:1.00px;height:11.00px;background:#3a3a3a;"></div>
<div class="r" style="left:395.90px;top:806.00px;width:1.00px;height:11.00px;background:#3a3a3a;"></div>
<div class="r" style="left:443.40px;top:806.00px;width:1.00px;height:11.00px;background:#3a3a3a;"></div>
<div class="r" style="left:503.80px;top:806.00px;width:1.00px;height:11.00px;background:#3a3a3a;"></div>
<div class="r" style="left:553.40px;top:806.00px;width:1.00px;height:11.00px;background:#3a3a3a;"></div>
<div class="r" style="left:579.00px;top:806.00px;width:1.00px;height:11.00px;background:#3a3a3a;"></div>
<div class="r" style="left:608.60px;top:806.00px;width:1.00px;height:11.00px;background:#3a3a3a;"></div>
<div class="r" style="left:638.00px;top:806.00px;width:1.00px;height:11.00px;background:#3a3a3a;"></div>
<div class="r" style="left:698.80px;top:806.00px;width:1.00px;height:11.00px;background:#3a3a3a;"></div>
<div class="r" style="left:821.00px;top:806.00px;width:1.00px;height:11.00px;background:#3a3a3a;"></div>
<div class="r" style="left:850.40px;top:806.00px;width:1.00px;height:11.00px;background:#3a3a3a;"></div>
<div class="r" style="left:891.50px;top:806.00px;width:1.00px;height:11.00px;background:#3a3a3a;"></div>
<div class="r" style="left:938.60px;top:806.00px;width:1.00px;height:11.00px;background:#3a3a3a;"></div>
<div class="r" style="left:975.30px;top:806.00px;width:1.00px;height:11.00px;background:#3a3a3a;"></div>
<div class="r" style="left:763.50px;top:800.50px;width:54.40px;height:18.50px;background:#e9f2f8;border-radius:0 0 4px 4px;"></div>
<div class="t" style="top:805.70px;font-size:9.8px;line-height:9.8px;color:#1a1a1a;left:750.70px;width:80px;text-align:center;">Summary</div>
<div class="r" style="left:770.00px;top:816.50px;width:41.50px;height:1.30px;background:#2f9b55;"></div>
<svg style="left:0;top:0" width="1390" height="844"><circle cx="999.3" cy="811" r="0.9" fill="#ddd"/><circle cx="1002.5" cy="811" r="0.9" fill="#ddd"/><circle cx="1005.7" cy="811" r="0.9" fill="#ddd"/><path d="M1026 806.5 L1026 815.5 M1021.5 811 L1030.5 811" stroke="#ddd" stroke-width="1"/><circle cx="1049.6" cy="807.5" r="0.8" fill="#ccc"/><circle cx="1049.6" cy="811" r="0.8" fill="#ccc"/><circle cx="1049.6" cy="814.5" r="0.8" fill="#ccc"/><path d="M1070 808 L1066 811 L1070 814 Z" fill="#9a9a9a"/><rect x="1073.8" y="808.3" width="257.8" height="5.4" rx="2.7" fill="#9c9c9c"/><path d="M1362 808 L1366 811 L1362 814 Z" fill="#9a9a9a"/></svg>
<div class="t" style="top:827.87px;font-size:7.6px;line-height:7.6px;color:#cfcfcf;left:12.70px;">Ready</div>
<svg style="left:0;top:0" width="1390" height="844"><rect x="47" y="826.5" width="10.5" height="8.5" fill="none" stroke="#bbb" stroke-width="0.9"/><path d="M47 828.8 L57.5 828.8" stroke="#bbb" stroke-width="0.9"/><circle cx="54.5" cy="832.5" r="2.6" fill="#151515" stroke="#bbb" stroke-width="0.9"/><path d="M71 826 L79 836 M79 826 L71 836" stroke="#bbb" stroke-width="0.9"/><circle cx="75" cy="827.5" r="1.4" fill="none" stroke="#bbb" stroke-width="0.8"/><rect x="1171.6" y="823.5" width="27" height="14" fill="#2a2a2a"/><rect x="1180" y="826.3" width="9.5" height="9" fill="none" stroke="#ddd" stroke-width="0.9"/><path d="M1180 829.3 L1189.5 829.3 M1180 832.3 L1189.5 832.3 M1183.2 826.3 L1183.2 835.3 M1186.4 826.3 L1186.4 835.3" stroke="#ddd" stroke-width="0.8"/><rect x="1209" y="826.3" width="10" height="9" fill="none" stroke="#ccc" stroke-width="0.9"/><rect x="1211.5" y="826.3" width="5" height="9" fill="none" stroke="#ccc" stroke-width="0.8"/><path d="M1238.5 835.3 L1238.5 826.3 L1248 826.3 L1248 835.3 M1241.5 826.3 L1241.5 831 L1245 831 L1245 826.3" fill="none" stroke="#ccc" stroke-width="0.9"/><path d="M1261.5 830.8 L1266.5 830.8" stroke="#aaa" stroke-width="1"/><path d="M1271 830.8 L1341.7 830.8" stroke="#8a8a8a" stroke-width="1"/><rect x="1305.8" y="826.3" width="3.2" height="9" rx="0.8" fill="#c8c8c8"/><path d="M1345.5 830.8 L1351.5 830.8 M1348.5 827.8 L1348.5 833.8" stroke="#aaa" stroke-width="1"/></svg>
<div class="t" style="top:827.87px;font-size:7.6px;line-height:7.6px;color:#e0e0e0;font-weight:bold;left:83.00px;">Accessibility: Investigate</div>
<div class="t" style="top:827.57px;font-size:8.3px;line-height:8.3px;color:#d8d8d8;left:1360.30px;">115%</div>
</body></html>
